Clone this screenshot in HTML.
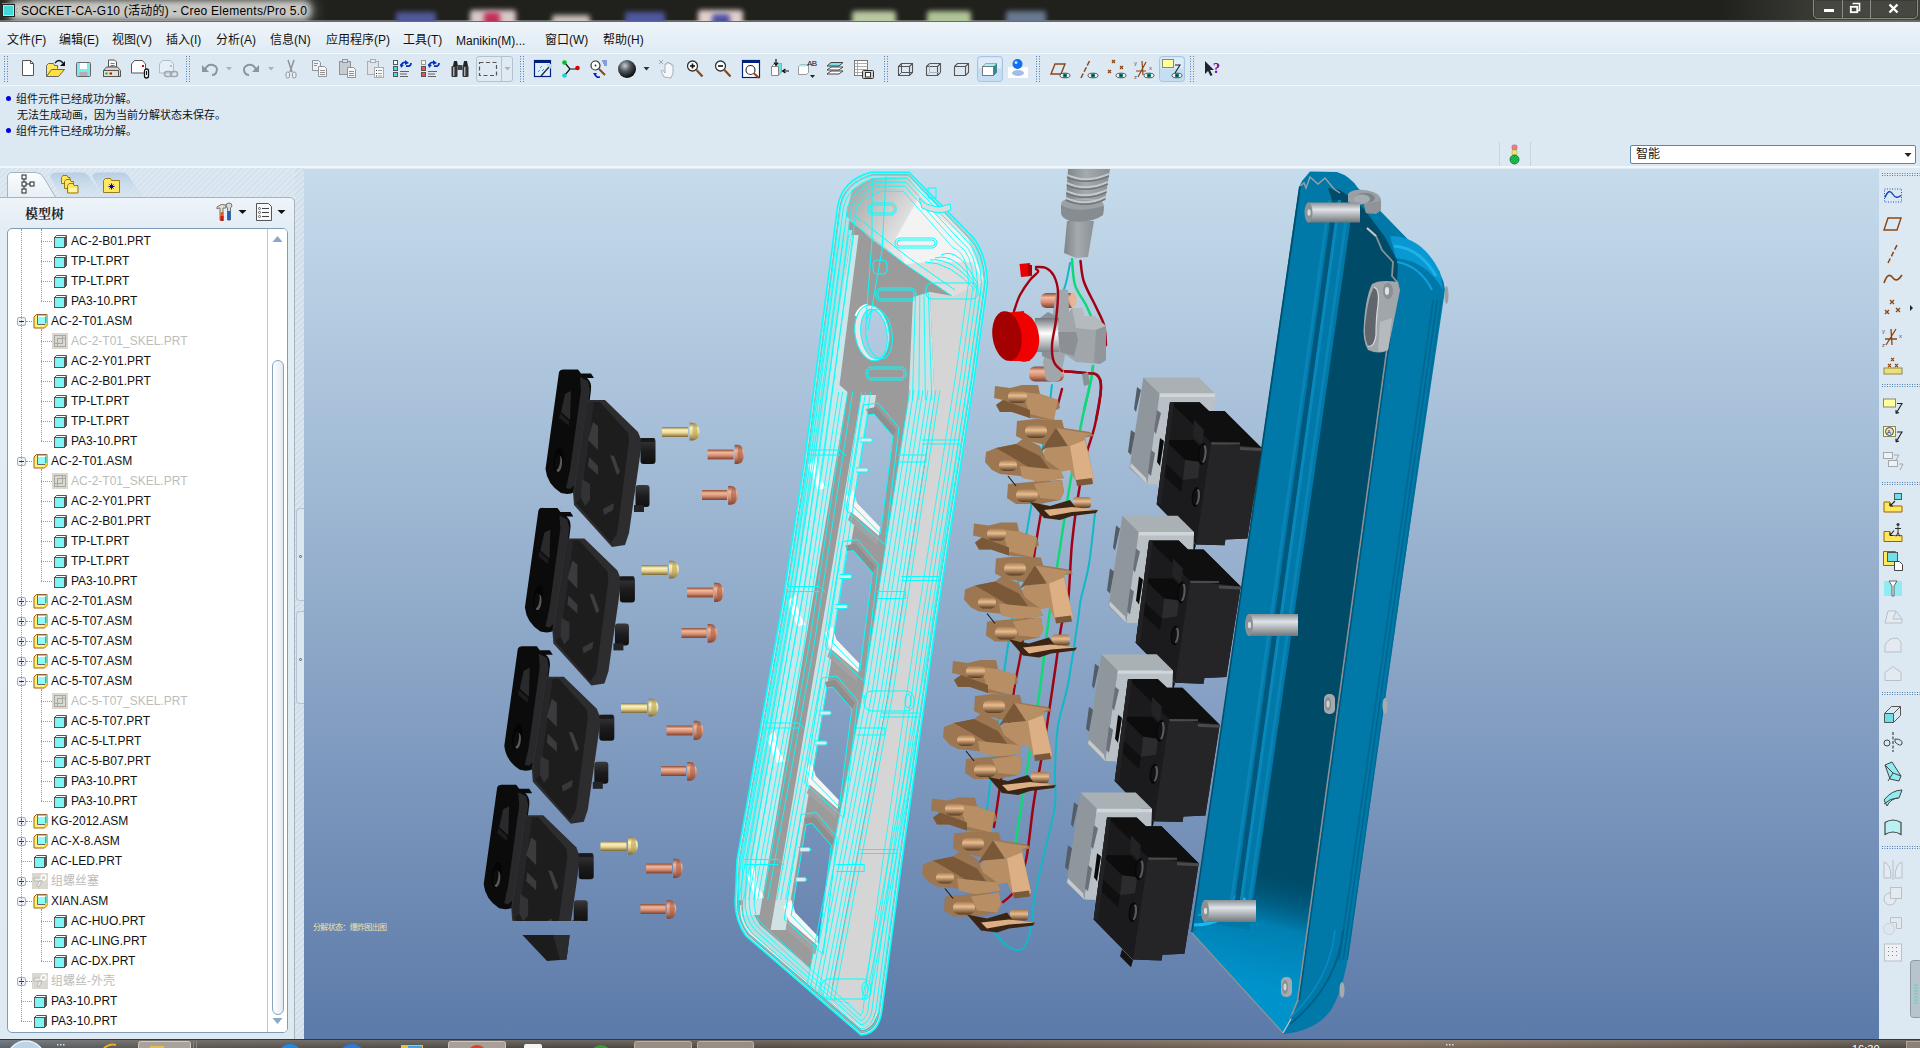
<!DOCTYPE html>
<html lang="zh-CN">
<head>
<meta charset="utf-8">
<title>SOCKET-CA-G10 (活动的) - Creo Elements/Pro 5.0</title>
<style>
*{box-sizing:border-box;margin:0;padding:0}
html,body{width:1920px;height:1048px;overflow:hidden;background:#dce9f3}
body{position:relative;font-family:"Liberation Sans","Noto Sans CJK SC",sans-serif;font-size:12px;color:#111}
.abs{position:absolute}
#titlebar{left:0;top:0;width:1920px;height:22px;background:linear-gradient(90deg,#20211d 0,#20211d 1720px,#3a3b35 1815px,#42433c 1920px);border-bottom:2px solid #6a6a66}
#titleglow{left:0;top:0;width:318px;height:21px;background:linear-gradient(90deg,rgba(215,215,212,.95) 0,rgba(210,210,207,.9) 240px,rgba(160,160,157,.55) 285px,rgba(60,60,56,0) 318px)}
#titletext{left:21px;top:3px;font-size:12px;line-height:16px;color:#000;white-space:nowrap;letter-spacing:0.25px}
#menubar{left:0;top:22px;width:1920px;height:31px;background:linear-gradient(180deg,#eef5fa 0,#e6eff6 60%,#dfeaf3 100%)}
.mi{position:absolute;top:8px;font-size:12px;line-height:20px;height:20px;color:#111;white-space:nowrap}
#toolbar{left:0;top:53px;width:1920px;height:33px;background:#dce9f3;border-top:1px solid #f3f8fb;border-bottom:1px solid #f3f8fb}
#msg{left:0;top:86px;width:1920px;height:81px;background:#dce9f3}
.ml{position:absolute;left:16px;font-size:11px;line-height:14px;letter-spacing:0;color:#111;white-space:nowrap}
.dot{position:absolute;left:6px;width:5px;height:5px;border-radius:3px;background:#0000e0}
#sep{left:0;top:166px;width:1920px;height:2px;background:#f1f6fa}
#left{left:0;top:168px;width:304px;height:872px;background:repeating-linear-gradient(135deg,#dde9f2 0,#dde9f2 2px,#d6e3ee 2px,#d6e3ee 4px)}
#view{left:304px;top:169px;width:1575px;height:871px;background:linear-gradient(180deg,#c6dcec 0,#5c7aa9 100%);overflow:hidden}
#right{left:1879px;top:168px;width:41px;height:872px;background:#dce9f3}
#taskbar{left:0;top:1039px;width:1920px;height:9px;background:linear-gradient(180deg,rgba(255,255,255,.18) 0,rgba(255,255,255,0) 100%),linear-gradient(90deg,#5a626c 0,#5a5650 8%,#4c4640 30%,#5c5046 50%,#7a6858 72%,#66584c 88%,#4e4842 100%);border-top:1px solid #3a3632}

#tabs{left:0;top:168px;width:304px;height:30px}
#panel{left:-2px;top:197px;width:297px;height:850px;border:1px solid #a7b4c0;border-radius:0 5px 0 0;background:linear-gradient(180deg,#eef4f9 0,#e3edf5 30px,#dfe9f2 100%)}
#ptitle{left:25px;top:203px;font-size:13px;font-weight:bold;color:#222;font-family:"Liberation Serif","Noto Serif CJK SC",serif;letter-spacing:0px}
#tbox{left:7px;top:228px;width:281px;height:805px;background:#fff;border:1px solid #7f9db9;border-radius:5px;overflow:hidden}
#tbox .ic{position:absolute}
.tt{position:absolute;font-size:12px;line-height:18px;color:#111;white-space:nowrap}
.tt.g{color:#bcbcbc}
.hd{position:absolute;height:0;border-top:1px dotted #9a9a9a}
.vd{position:absolute;width:0;border-left:1px dotted #9a9a9a}
#sbar{left:259px;top:0;width:21px;height:806px;background:#fff;border-left:1px solid #b8c8d8;position:absolute}
#sthumb{position:absolute;left:4px;top:131px;width:12px;height:655px;border:1px solid #8aa4c0;border-radius:6px;background:linear-gradient(90deg,#fdfeff 0,#eef3f8 60%,#dfe8f0 100%)}
#sash{left:295px;top:168px;width:9px;height:872px;background:repeating-linear-gradient(135deg,#dbe6f0 0,#dbe6f0 2px,#d0deea 2px,#d0deea 4px)}
.sh{position:absolute;left:1px;width:9px;border:1px solid #b4c4d4;border-right:none;border-radius:4px 0 0 4px;background:#dbe6f0}
.sh i{position:absolute;left:2px;top:50%;width:3px;height:3px;border:1px solid #556;border-radius:2px}

#tglow{left:0;top:0;width:340px;height:21px;overflow:hidden}
#tglow i{position:absolute;left:16px;top:8px;width:288px;height:5px;background:rgba(208,208,204,.95);box-shadow:0 0 6px 7px rgba(208,208,204,.95),0 0 14px 10px rgba(150,150,146,.6);border-radius:4px}
#wbtn{left:1813px;top:-1px;width:105px;height:20px;border:1px solid #8a8b84;border-radius:0 0 5px 5px;background:#464740;box-shadow:inset 0 0 0 1px #3a3b35}
#wbtn b{position:absolute;top:0;width:1px;height:18px;background:#8a8b84}
#combo{left:1630px;top:145px;width:286px;height:19px;background:#fff;border:1px solid #5b86a8;border-radius:2px;font-size:12px;line-height:17px;padding-left:5px}

#blobs{left:0;top:0;width:1920px;height:21px;overflow:hidden}
#blobs i{position:absolute;top:10px;height:16px;border-radius:3px;filter:blur(2.5px)}
</style>
</head>
<body>
<div id="titlebar" class="abs"></div>
<div id="blobs" class="abs"><i style="left:396px;width:40px;top:12px;background:#50589a"></i><i style="left:470px;width:46px;background:#d8c8c8"></i><i style="left:484px;width:16px;top:12px;background:#c0305a"></i><i style="left:552px;width:38px;top:15px;background:#c8c0b8"></i><i style="left:625px;width:40px;top:12px;background:#5058a0"></i><i style="left:698px;width:45px;background:#e0d0cc"></i><i style="left:712px;width:18px;top:14px;background:#5050a0"></i><i style="left:852px;width:44px;top:11px;background:#b8c8a0"></i><i style="left:927px;width:44px;top:11px;background:#b0c498"></i><i style="left:1006px;width:40px;top:11px;background:#687890"></i></div>
<div id="tglow" class="abs"><i></i></div>
<div id="titletext" class="abs">SOCKET-CA-G10 (活动的) - Creo Elements/Pro 5.0</div>
<svg class="abs" style="left:0;top:0" width="20" height="21" viewBox="0 0 20 21"><rect x="2.500" y="4.500" width="12" height="12" fill="#f4e060" stroke="#222"/><rect x="4" y="6" width="9" height="9" fill="#40d8d8"/><path d="M2,3.500 h12" stroke="#888"/></svg>
<div id="wbtn" class="abs"><b style="left:28px"></b><b style="left:56px"></b></div>
<svg class="abs" style="left:1813px;top:0" width="105" height="20" viewBox="1813 0 105 20"><rect x="1824" y="9" width="10" height="3" fill="#fff"/><path d="M1852.500,3.500 h7 v7 h-2" fill="none" stroke="#fff" stroke-width="1.600"/><rect x="1850.800" y="6.800" width="6.400" height="5.400" fill="none" stroke="#fff" stroke-width="1.800"/><path d="M1889.500,4.500 l8,8 M1897.500,4.500 l-8,8" stroke="#fff" stroke-width="2.400"/></svg>
<div id="menubar" class="abs">
<span class="mi" style="left:7px">文件(F)</span>
<span class="mi" style="left:59px">编辑(E)</span>
<span class="mi" style="left:112px">视图(V)</span>
<span class="mi" style="left:166px">插入(I)</span>
<span class="mi" style="left:216px">分析(A)</span>
<span class="mi" style="left:270px">信息(N)</span>
<span class="mi" style="left:326px">应用程序(P)</span>
<span class="mi" style="left:403px">工具(T)</span>
<span class="mi" style="left:456px;top:9px">Manikin(M)...</span>
<span class="mi" style="left:545px">窗口(W)</span>
<span class="mi" style="left:603px">帮助(H)</span>
</div>
<div id="toolbar" class="abs"></div>
<!--TOOLBAR-->
<svg class="abs" style="left:0;top:53px" width="1300" height="33" viewBox="0 53 1300 33"><path d="M4.5,56 v27 M7.5,56 v27" stroke="#4f7fb4" stroke-width="1" stroke-dasharray="1,1.5" fill="none"/><path d="M186.5,56 v27 M189.5,56 v27" stroke="#4f7fb4" stroke-width="1" stroke-dasharray="1,1.5" fill="none"/><path d="M520.5,56 v27 M523.5,56 v27" stroke="#4f7fb4" stroke-width="1" stroke-dasharray="1,1.5" fill="none"/><path d="M884.5,56 v27 M887.5,56 v27" stroke="#4f7fb4" stroke-width="1" stroke-dasharray="1,1.5" fill="none"/><path d="M1036.5,56 v27 M1039.5,56 v27" stroke="#4f7fb4" stroke-width="1" stroke-dasharray="1,1.5" fill="none"/><path d="M1190.5,56 v27 M1193.5,56 v27" stroke="#4f7fb4" stroke-width="1" stroke-dasharray="1,1.5" fill="none"/><g transform="translate(28,69)"><path d="M-5.500,-8.500 h8 l3,3 v12 h-11z" fill="#fff" stroke="#555"/><path d="M2.500,-8.500 v3 h3" fill="none" stroke="#555"/></g><g transform="translate(56,69)"><path d="M-9.500,7.500 v-11 l2,-2 h5 l1,2 h3 v3" fill="#ffe860" stroke="#666"/><path d="M-9.500,7.500 l5,-7 h13 l-6,7z" fill="#ffe040" stroke="#666"/><path d="M-1,-6 q4,-5 8,0" fill="none" stroke="#111" stroke-width="1.300"/><path d="M9,-8 v5 h-5z" fill="#111"/></g><g transform="translate(84,69)"><rect x="-7.500" y="-6.500" width="14" height="14" rx="1" fill="#7eeaf0" stroke="#666"/><rect x="-4" y="-6" width="7" height="6" fill="#fff"/><rect x="-4.500" y="3" width="8" height="4" fill="#b0b0b0"/></g><g transform="translate(112,69)"><path d="M-3.500,-2 v-7 h6 l2,2 v5z" fill="#fff" stroke="#555"/><path d="M-1.500,-5.500h4M-1.500,-3.500h4" stroke="#555" stroke-width=".8"/><path d="M-8.500,1.500 l3,-3.500 h11 l3,3.500 v6 h-17z" fill="#d8d4c8" stroke="#555"/><rect x="-8.500" y="1.500" width="15" height="6" fill="#e4e0d4" stroke="#555"/><rect x="-6.500" y="3.500" width="2" height="2" fill="#00b000"/><rect x="-2.500" y="3.500" width="2.500" height="2" fill="#d00000"/></g><g transform="translate(140,69)"><path d="M-8.500,4 v-9 l3,-3.500 h8 l3,3.500 v9z" fill="#fff" stroke="#555"/><rect x="2" y="-4" width="2" height="2" fill="#e00000"/><rect x="4.500" y="0" width="4" height="9" rx="2" fill="#fff" stroke="#111" stroke-width="1.300"/><path d="M6.500,2v4" stroke="#111"/></g><g transform="translate(168,69)"><path d="M-8.500,4 v-9 l3,-3.500 h8 l3,3.500 v9z" fill="#e6eef6" stroke="#b4bcc4"/><rect x="2" y="-4" width="2" height="2" fill="#b4bcc4"/><rect x="-3.500" y="2.500" width="7" height="5" rx="2.500" fill="none" stroke="#a0a8b0" stroke-width="1.500"/><rect x="2.500" y="2.500" width="7" height="5" rx="2.500" fill="none" stroke="#a0a8b0" stroke-width="1.500"/></g><g transform="translate(210,69)"><path d="M-8,-4 v7 h7z" fill="#8e9499"/><path d="M-5,1 q2,-6 8,-5 q6,2 3,8 q-1,2 -4,2" fill="none" stroke="#8e9499" stroke-width="2"/></g><path d="M226,67 h6 l-3,3.500z" fill="#aab2ba"/><g transform="translate(251,69)"><path d="M8,-4 v7 h-7z" fill="#8e9499"/><path d="M5,1 q-2,-6 -8,-5 q-6,2 -3,8 q1,2 4,2" fill="none" stroke="#8e9499" stroke-width="2"/></g><path d="M268,67 h6 l-3,3.500z" fill="#aab2ba"/><g transform="translate(291,69)"><path d="M-3,-9 l4,12 M3,-9 l-4,12" stroke="#8e9499" stroke-width="1.500" fill="none"/><rect x="-5" y="3" width="3.500" height="6" rx="1.700" fill="#e8eef4" stroke="#8e9499"/><rect x="1.500" y="3" width="3.500" height="6" rx="1.700" fill="#e8eef4" stroke="#8e9499"/></g><g transform="translate(320,69)"><path d="M-7.500,-8.500 h6 l2,2 v8 h-8z" fill="#eef2f6" stroke="#8e9499"/><path d="M-1.500,-2.500 h6 l2,2 v8 h-8z" fill="#f4f6f8" stroke="#8e9499"/><path d="M0,1.500h5M0,3.500h5M0,5.500h5M-6,-5.500h4M-6,-3.500h3" stroke="#777" stroke-width=".8"/></g><g transform="translate(348,69)"><rect x="-8.500" y="-7.500" width="11" height="13" fill="#c8ccd0" stroke="#8e9499"/><rect x="-5.500" y="-9.500" width="5" height="3" fill="#dde" stroke="#8e9499"/><path d="M-0.500,-1.500 h6 l2,2 v8 h-8z" fill="#f4f6f8" stroke="#8e9499"/><path d="M1,2.500h5M1,4.500h5M1,6.500h5" stroke="#777" stroke-width=".8"/></g><g transform="translate(376,69)"><rect x="-8.500" y="-7.500" width="11" height="13" fill="#dfe5ea" stroke="#a8aeb4"/><rect x="-5.500" y="-9.500" width="5" height="3" fill="#e8ecf0" stroke="#a8aeb4"/><rect x="-1.500" y="-1.500" width="9" height="10" fill="#f6f8fa" stroke="#a8aeb4"/><path d="M2,1.500h4M2,4.500h4M2,7h4" stroke="#888" stroke-width=".8"/><path d="M0,1.500h1M0,4.500h1M0,7h1" stroke="#333" stroke-width="1"/></g><g transform="translate(403,69)"><rect x="-9.500" y="-8.500" width="4" height="4" fill="#fff" stroke="#555"/><rect x="-9.500" y="-2.500" width="4" height="4" fill="#40e0e8" stroke="#555"/><rect x="-9.500" y="3.500" width="4" height="4" fill="#40e0e8" stroke="#555"/><path d="M-2,-3 q1,-5 6,-3" fill="none" stroke="#0030c0" stroke-width="1.800"/><path d="M2,-9 l4,3 l-4,2z" fill="#0030c0"/><path d="M8,-6 q0,4 -5,3" fill="none" stroke="#0030c0" stroke-width="1.800"/><path d="M-3,-5 l4,1 l-3,3z" fill="#0030c0"/><path d="M-3,2.500h9M-3,5h7M-3,7.500h8" stroke="#555" stroke-width=".9"/></g><g transform="translate(431,69)"><rect x="-9.500" y="-8.500" width="4" height="4" fill="#f4f4f4" stroke="#999"/><rect x="-9.500" y="-2.500" width="4" height="4" fill="#f05050" stroke="#555"/><rect x="-9.500" y="3.500" width="4" height="4" fill="#f05050" stroke="#555"/><path d="M-2,-3 q1,-5 6,-3" fill="none" stroke="#0030c0" stroke-width="1.800"/><path d="M2,-9 l4,3 l-4,2z" fill="#0030c0"/><path d="M8,-6 q0,4 -5,3" fill="none" stroke="#0030c0" stroke-width="1.800"/><path d="M-3,-5 l4,1 l-3,3z" fill="#0030c0"/><path d="M-3,2.500h9M-3,5h7M-3,7.500h8" stroke="#555" stroke-width=".9"/></g><g transform="translate(460,69)"><rect x="-8.500" y="-3" width="6" height="11" rx="1" fill="#333"/><rect x="2.500" y="-3" width="6" height="11" rx="1" fill="#333"/><path d="M-7,-3 l1,-5 h3 l1,5z M3,-3 l1,-5 h3 l1,5z" fill="#222"/><rect x="-2.500" y="-4" width="5" height="5" fill="#444"/><rect x="-7" y="-2" width="1.500" height="9" fill="#aaa"/><rect x="4" y="-2" width="1.500" height="9" fill="#aaa"/></g><rect x="476.500" y="56.500" width="36" height="25" rx="2.500" fill="#dfeaf3" stroke="#b4c2d0"/><path d="M501.500,57v24" stroke="#b4c2d0"/><rect x="479.500" y="62.500" width="17" height="13" fill="none" stroke="#555" stroke-width="1.200" stroke-dasharray="4,2.500"/><path d="M504.500,67 h6 l-3,3.500z" fill="#aab2ba"/><g transform="translate(543,69)"><rect x="-8.500" y="-8.500" width="16" height="16" fill="#dfefff" stroke="#002080" stroke-width="1.200"/><rect x="-8.500" y="-8.500" width="16" height="2.500" fill="#002080"/><path d="M-2,7 l8,-9" stroke="#333" stroke-width="1.500"/><path d="M-5,3 l2,-2 M-3,-1 l2,-2M-1,2l2,-2" stroke="#30a0e0" stroke-width="1"/><path d="M3,-5 l5,0 l0,5z" fill="#b8d4f0"/></g><g transform="translate(571,69)"><path d="M-6,-6 l5,6 l-5,6 M-1,0 h8" stroke="#111" stroke-width="1.200" fill="none"/><circle cx="-6.500" cy="-6.500" r="2.300" fill="#00c020"/><circle cx="-6.500" cy="6.500" r="2.300" fill="#10d8e0"/><circle cx="6.500" cy="-1" r="2.300" fill="#e00000"/></g><g transform="translate(599,69)"><circle cx="-3.500" cy="-3.500" r="4.500" fill="#fff" stroke="#333" stroke-width="1.200"/><circle cx="-3.500" cy="-3.500" r="1" fill="#333"/><path d="M0,0 l6,6" stroke="#8b4513" stroke-width="2"/><path d="M3,-8h5M4,-6h4M5,-4h3" stroke="#2040c0" stroke-width=".9"/><path d="M-4,5 q1,4 5,3" fill="none" stroke="#0020c0" stroke-width="1.500"/><path d="M-6,4 l4,0 l-2,3z" fill="#0020c0"/></g><defs><radialGradient id="gSph" cx=".38" cy=".32" r=".7"><stop offset="0" stop-color="#c8ccd0"/><stop offset=".45" stop-color="#50565c"/><stop offset="1" stop-color="#08080a"/></radialGradient></defs><g transform="translate(627,69)"><circle cx="0" cy="0" r="9" fill="url(#gSph)"/></g><path d="M643.500,67 h6 l-3,3.500z" fill="#333"/><g transform="translate(668,69)"><path d="M-4,8 l-3,-6 l1.500,-1 l2.500,3 v-9 h2 v-1.500 h2 v1 h2 v1.500 h2 v8 l-2,5z" fill="#f4f8fb" stroke="#a0a8b0" stroke-width=".9"/><path d="M-9,-9 l4,4 M-5,-9 l-4,4" stroke="#a0a8b0" stroke-width="1"/></g><g transform="translate(695,69)"><circle cx="-2.500" cy="-3" r="5" fill="#fff" stroke="#333" stroke-width="1.300"/><path d="M1.500,1 l6,6.500" stroke="#8b4513" stroke-width="2.200"/><path d="M-5,-3 h5" stroke="#111" stroke-width="1.600"/><path d="M-2.500,-5.500 v5" stroke="#111" stroke-width="1.600"/></g><g transform="translate(723,69)"><circle cx="-2.500" cy="-3" r="5" fill="#fff" stroke="#333" stroke-width="1.300"/><path d="M1.500,1 l6,6.500" stroke="#8b4513" stroke-width="2.200"/><path d="M-5,-3 h5" stroke="#111" stroke-width="1.600"/></g><g transform="translate(751,69)"><rect x="-8.500" y="-8.500" width="17" height="17" fill="#fff" stroke="#002080" stroke-width="1.200"/><rect x="-8.500" y="-8.500" width="17" height="2.500" fill="#002080"/><circle cx="-0.500" cy="1" r="4.500" fill="#fff" stroke="#333" stroke-width="1.200"/><path d="M3,4.500 l5,4.500" stroke="#8b4513" stroke-width="2"/></g><g transform="translate(779,69)"><path d="M-7.500,-2.500 l3,-3 h7 v9 l-3,3 h-7z" fill="#fff" stroke="#888"/><path d="M-4.500,-5.500 h7 v9 l-3,3 v-9 z" fill="#70e0e8"/><path d="M-7.500,-2.500 h7 v9" fill="none" stroke="#888"/><path d="M-3,-10 v6 M-5,-6.500 l2,3 l2,-3" stroke="#111" stroke-width="1.200" fill="none"/><path d="M10,2 h-6 M6.500,0 l-3,2 l3,2" stroke="#111" stroke-width="1.200" fill="none"/></g><g transform="translate(807,69)"><path d="M-8.500,-2.500 l2,-2 h8 v8 l-2,2 h-8z" fill="#fff" stroke="#999"/><path d="M-6.500,-4.500 h8 l-2,2 h-8z" fill="#a8ecf0"/><text x="0" y="-3" font-size="8" font-family="Liberation Sans,sans-serif" fill="#111" textLength="10">AB</text><path d="M3,6 h5 l-2.500,3z" fill="#222"/></g><g transform="translate(835,69)"><path d="M-8,5 l4,-3 h12 l-4,3z" fill="#fff" stroke="#444"/><path d="M-8,1 l4,-3 h12 l-4,3z" fill="#fff" stroke="#444"/><path d="M-8,-3 l4,-3.500 h12 l-4,3.500z" fill="#78e4ec" stroke="#444"/></g><g transform="translate(864,69)"><rect x="-9.500" y="-8.500" width="13" height="15" fill="#fff" stroke="#777"/><path d="M-9.500,-5.500h13M-9.500,-2.500h13M-9.500,.5h13M-9.500,3.500h13M-6.500,-8.500v15" stroke="#999" stroke-width=".8"/><rect x="-1.500" y="1.500" width="11" height="8" rx="1" fill="#d0d0c8" stroke="#333"/><rect x="1.500" y="3.500" width="5" height="4.500" fill="#fff" stroke="#333"/></g><g transform="translate(906,69)"><path d="M-7.500,-2.500 l3,-3 h11 v9 l-3,3 h-11z M-7.500,-2.500 h11 v9 M3.500,-2.500 l3,-3" fill="none" stroke="#555" stroke-width="1.100"/><path d="M-4.500,-5.500 v9 h11 M-4.500,3.500 l-3,3" fill="none" stroke="#555" stroke-width="1"/></g><g transform="translate(934,69)"><path d="M-7.500,-2.500 l3,-3 h11 v9 l-3,3 h-11z M-7.500,-2.500 h11 v9 M3.500,-2.500 l3,-3" fill="none" stroke="#555" stroke-width="1.100"/><path d="M-4.500,-5.500 v9 h11 M-4.500,3.500 l-3,3" fill="none" stroke="#b0b4b8" stroke-width="1"/></g><g transform="translate(962,69)"><path d="M-7.500,-2.500 l3,-3 h11 v9 l-3,3 h-11z M-7.500,-2.500 h11 v9 M3.500,-2.500 l3,-3" fill="none" stroke="#555" stroke-width="1.100"/></g><rect x="977.500" y="56.500" width="25" height="25" rx="3" fill="#c4def4" stroke="#a8c4e0"/><rect x="978.500" y="57.500" width="23" height="11" rx="2" fill="#dcecf9"/><g transform="translate(990,69)"><path d="M-7.500,-2.500 l3,-3 h11 v9 l-3,3 h-11z" fill="#fff" stroke="#777"/><path d="M-7.500,-2.500 l3,-3 h11 l-3,3z" fill="#a0f0f4"/><path d="M3.500,-2.500 l3,-3 v9 l-3,3z" fill="#209098"/><rect x="-7.500" y="-2.500" width="11" height="9" fill="#fff" stroke="#777"/></g><g transform="translate(1018,69)"><rect x="-10" y="-2" width="20" height="11" fill="#fff"/><ellipse cx="0" cy="4" rx="6" ry="3" fill="#7aa0d8" opacity=".7"/><circle cx="-0.500" cy="-5" r="5" fill="#1070f0"/><circle cx="-2" cy="-6.500" r="1.500" fill="#c0e0ff"/></g><g transform="translate(1060,69)"><path d="M-9,5 l4,-10 h10 l-4,10z" fill="none" stroke="#8b4513" stroke-width="1.400"/><ellipse cx="5" cy="6.500" rx="5" ry="2.300" fill="#fff" stroke="#222" stroke-width=".8"/><circle cx="5" cy="6.500" r="2.200" fill="#108078"/><circle cx="5" cy="6.500" r=".9" fill="#033"/></g><g transform="translate(1088,69)"><path d="M-7,9 l9,-18" stroke="#8b4513" stroke-width="1.500" stroke-dasharray="5,2" fill="none"/><ellipse cx="5" cy="6.500" rx="5" ry="2.300" fill="#fff" stroke="#222" stroke-width=".8"/><circle cx="5" cy="6.500" r="2.200" fill="#108078"/><circle cx="5" cy="6.500" r=".9" fill="#033"/></g><g transform="translate(1116,69)"><path d="M-4,-9l3,3m0,-3l-3,3 M-8,1l3,3m0,-3l-3,3 M4,-3l3,3m0,-3l-3,3" stroke="#8b4513" stroke-width="1.200" fill="none"/><ellipse cx="5" cy="6.500" rx="5" ry="2.300" fill="#fff" stroke="#222" stroke-width=".8"/><circle cx="5" cy="6.500" r="2.200" fill="#108078"/><circle cx="5" cy="6.500" r=".9" fill="#033"/></g><g transform="translate(1144,69)"><path d="M-8,2 h10 M-2,-8 l1,14 M-6,8 l8,-15" stroke="#8b4513" stroke-width="1.200" fill="none"/><text x="-10" y="-4" font-size="6" font-family="Liberation Sans,sans-serif" fill="#555">y</text><text x="-10" y="10" font-size="6" font-family="Liberation Sans,sans-serif" fill="#555">z</text><text x="5" y="1" font-size="6" font-family="Liberation Sans,sans-serif" fill="#555">x</text><ellipse cx="5" cy="6.500" rx="5" ry="2.300" fill="#fff" stroke="#222" stroke-width=".8"/><circle cx="5" cy="6.500" r="2.200" fill="#108078"/><circle cx="5" cy="6.500" r=".9" fill="#033"/></g><rect x="1159.500" y="56.500" width="25" height="25" rx="3" fill="#c4def4" stroke="#a8c4e0"/><rect x="1160.500" y="57.500" width="23" height="11" rx="2" fill="#dcecf9"/><g transform="translate(1172,69)"><rect x="-9.500" y="-9.500" width="11" height="8" fill="#ffffa0" stroke="#886"/><path d="M3,-4 h5 l-5,8" fill="none" stroke="#222" stroke-width="1.100"/><ellipse cx="5" cy="6.500" rx="5" ry="2.300" fill="#fff" stroke="#222" stroke-width=".8"/><circle cx="5" cy="6.500" r="2.200" fill="#108078"/><circle cx="5" cy="6.500" r=".9" fill="#033"/></g><g transform="translate(1213,69)"><path d="M-8,-8 v13 l3,-3 l2.500,5 l2,-1 l-2.500,-5 h4z" fill="#223"/><text x="0" y="4" font-size="14" font-weight="bold" font-family="Liberation Serif,serif" fill="#800080">?</text></g></svg>
<!--/TOOLBAR-->
<div id="msg" class="abs">
<i class="dot" style="top:9.5px"></i><span class="ml" style="top:5.5px">组件元件已经成功分解。</span>
<span class="ml" style="top:21.5px;left:17px">无法生成动画，因为当前分解状态未保存。</span>
<i class="dot" style="top:41.5px"></i><span class="ml" style="top:37.5px">组件元件已经成功分解。</span>
</div>
<div id="sep" class="abs"></div>
<div id="combo" class="abs">智能</div>
<svg class="abs" style="left:1495px;top:140px" width="425" height="28" viewBox="1495 140 425 28"><path d="M1904.500,153 h7 l-3.500,4z" fill="#222"/><path d="M1499.500,142 v24 M1530.500,142 v24" stroke="#c8d4de"/><rect x="1512" y="145" width="5" height="5" rx="1.500" fill="#f08080" stroke="#a66" stroke-width=".6"/><rect x="1512" y="150" width="5" height="5" rx="1.500" fill="#f0e860" stroke="#aa6" stroke-width=".6"/><circle cx="1514.500" cy="159.500" r="4.500" fill="#20c040" stroke="#064" stroke-width=".8"/><path d="M1512,162 l5,-5 M1511,160 l4,-4 M1514,163 l4,-4" stroke="#085" stroke-width=".6"/></svg>
<div id="left" class="abs"></div>
<svg id="tabs" class="abs" width="304" height="30" viewBox="0 168 304 30">
<defs><linearGradient id="tabA" x1="0" y1="0" x2="0" y2="1"><stop offset="0" stop-color="#fbfdfe"/><stop offset="1" stop-color="#e6eef5"/></linearGradient>
<linearGradient id="tabB" x1="0" y1="0" x2="0" y2="1"><stop offset="0" stop-color="#b7cee3"/><stop offset="1" stop-color="#d3e1ee" stop-opacity=".3"/></linearGradient></defs>
<path d="M50,176 Q52,172.500 56,172.500 L82,172.500 Q87,172.500 90,178 L104,198 L62,198 Z" fill="url(#tabB)"/>
<path d="M92,176 Q94,172.500 98,172.500 L122,172.500 Q127,172.500 130,178 L144,198 L104,198 Z" fill="url(#tabB)"/>
<path d="M7.500,198 L7.500,177 Q7.500,172.500 12,172.500 L36,172.500 Q41,172.500 44,178 L56,198 Z" fill="url(#tabA)" stroke="#a7b4c0"/>
<g transform="translate(-0.5,-1.5)" fill="#fff" stroke="#222" stroke-width="1"><rect x="22.500" y="176.500" width="4" height="4"/><rect x="22.500" y="183.500" width="4" height="4"/><rect x="22.500" y="190.500" width="4" height="4"/><rect x="30.500" y="183.500" width="4" height="4"/><path d="M24.500,180.500v3M24.500,187.500v3M26.500,185.500h4" fill="none"/></g>
<g stroke="#806000" stroke-width=".8" fill="#ffe860"><path d="M61.500,177.500 l1.500,-2 h4 l1,2 h2 v6 h-8.500z"/><path d="M64.500,181.500 l1.500,-2 h4 l1,2 h2.500 v7 h-9z"/><path d="M67.500,185.500 l1.500,-2 h4 l1,2 h4 v7.500 h-10.500z"/></g>
<rect x="69" y="188" width="8" height="4" fill="#fff6a8"/>
<path d="M103.500,180.500 l2,-2 h5 l1,2 h8 v12 h-16z" fill="#ffe860" stroke="#806000" stroke-width=".8"/>
<path d="M111.500,183.500v6M108.500,186.500h6M109.500,184.500l4,4M113.500,184.500l-4,4" stroke="#0000c0" stroke-width="1" fill="none"/>
</svg>
<div id="panel" class="abs"></div>
<div id="ptitle" class="abs">模型树</div>
<svg class="abs" style="left:210px;top:200px" width="80" height="24" viewBox="210 200 80 24">
<path d="M217,207 q4,-4 9,-2 l0,3 l-3,0 l0,12 l-3,0 l0,-12 q-2,0 -3,1z" fill="#e8e0d0" stroke="#555" stroke-width=".8"/>
<rect x="220.500" y="212" width="3" height="9" fill="#e06020"/><rect x="220.500" y="216" width="3" height="5" fill="#c02010"/>
<path d="M229,203 q3,0 3,3 l-1.500,2 l0,12 l-3,0 l0,-12 l-1.500,-2 q0,-3 3,-3z" fill="#d8dce0" stroke="#555" stroke-width=".8"/>
<rect x="227.500" y="211" width="3" height="9" fill="#2060c0"/>
<path d="M238.500,210 h8 l-4,4z" fill="#111"/>
<path d="M256.500,203.500 h12 l3,3 v14 h-15z" fill="#f8f8f8" stroke="#555" stroke-width="1"/>
<path d="M262,208.500h7M262,212.500h7M262,216.500h7" stroke="#444" stroke-width="1"/><g fill="#fff" stroke="#444" stroke-width=".8"><circle cx="259.500" cy="208.500" r="1"/><circle cx="259.500" cy="212.500" r="1"/><circle cx="259.500" cy="216.500" r="1"/></g>
<path d="M277.500,210 h8 l-4,4z" fill="#111"/>
</svg>
<div id="tbox" class="abs">
<!--TREE-->
<i class="hd" style="left:32.5px;top:12px;width:11px"></i>
<svg class="ic" style="left:44.5px;top:5px" width="15" height="15" viewBox="0 0 15 15"><polygon points="1.5,3.5 3.5,1.5 13.5,1.5 13.5,11.5 11.5,13.5 1.5,13.5" fill="#fff" stroke="#555" stroke-width="1"/><rect x="1.5" y="3.5" width="10" height="10" fill="#7ff4f4" stroke="#555" stroke-width="1"/><polygon points="11.5,3.5 13.5,1.5 13.5,11.5 11.5,13.5" fill="#4a5a5a"/></svg>
<span class="tt" style="left:63.0px;top:3px">AC-2-B01.PRT</span>
<i class="hd" style="left:32.5px;top:32px;width:11px"></i>
<svg class="ic" style="left:44.5px;top:25px" width="15" height="15" viewBox="0 0 15 15"><polygon points="1.5,3.5 3.5,1.5 13.5,1.5 13.5,11.5 11.5,13.5 1.5,13.5" fill="#fff" stroke="#555" stroke-width="1"/><rect x="1.5" y="3.5" width="10" height="10" fill="#7ff4f4" stroke="#555" stroke-width="1"/><polygon points="11.5,3.5 13.5,1.5 13.5,11.5 11.5,13.5" fill="#4a5a5a"/></svg>
<span class="tt" style="left:63.0px;top:23px">TP-LT.PRT</span>
<i class="hd" style="left:32.5px;top:52px;width:11px"></i>
<svg class="ic" style="left:44.5px;top:45px" width="15" height="15" viewBox="0 0 15 15"><polygon points="1.5,3.5 3.5,1.5 13.5,1.5 13.5,11.5 11.5,13.5 1.5,13.5" fill="#fff" stroke="#555" stroke-width="1"/><rect x="1.5" y="3.5" width="10" height="10" fill="#7ff4f4" stroke="#555" stroke-width="1"/><polygon points="11.5,3.5 13.5,1.5 13.5,11.5 11.5,13.5" fill="#4a5a5a"/></svg>
<span class="tt" style="left:63.0px;top:43px">TP-LT.PRT</span>
<i class="hd" style="left:32.5px;top:72px;width:11px"></i>
<svg class="ic" style="left:44.5px;top:65px" width="15" height="15" viewBox="0 0 15 15"><polygon points="1.5,3.5 3.5,1.5 13.5,1.5 13.5,11.5 11.5,13.5 1.5,13.5" fill="#fff" stroke="#555" stroke-width="1"/><rect x="1.5" y="3.5" width="10" height="10" fill="#7ff4f4" stroke="#555" stroke-width="1"/><polygon points="11.5,3.5 13.5,1.5 13.5,11.5 11.5,13.5" fill="#4a5a5a"/></svg>
<span class="tt" style="left:63.0px;top:63px">PA3-10.PRT</span>
<svg class="ic" style="left:8.5px;top:88px" width="9" height="9" viewBox="0 0 9 9"><rect x=".5" y=".5" width="8" height="8" rx="1.5" fill="#eef4fa" stroke="#9ab0c8"/><path d="M2,4.500 h5" stroke="#333" stroke-width="1"/></svg>
<i class="hd" style="left:17.5px;top:92px;width:6px"></i>
<svg class="ic" style="left:24.5px;top:85px" width="15" height="15" viewBox="0 0 15 15"><polygon points="1,3 3.5,0.5 14,0.5 14,11.5 11.5,14 1,14" fill="#fff278" stroke="#a85a10" stroke-width="1"/><polygon points="11.5,11 14,8.500 14,11.500 11.500,14" fill="#ffc800"/><rect x="5" y="1" width="8.500" height="9" fill="#fff"/><rect x="5" y="3" width="7" height="7" fill="#8ffcfc"/><polygon points="12,3 13.500,1.500 13.500,8.500 12,10" fill="#00c4c4"/><path d="M4.500,1 v9.500 h7.500" fill="none" stroke="#666" stroke-width="1"/><path d="M5,1 h8.500" stroke="#777" stroke-width="1"/></svg>
<span class="tt" style="left:43.0px;top:83px">AC-2-T01.ASM</span>
<i class="hd" style="left:32.5px;top:112px;width:11px"></i>
<svg class="ic" style="left:43.5px;top:104px" width="16" height="16" viewBox="0 0 16 16"><rect x="0" y="0" width="16" height="16" fill="#d8d8d0"/><rect x="2.500" y="2.500" width="8" height="8" fill="none" stroke="#a8a8a0"/><rect x="5.500" y="5.500" width="8" height="8" fill="none" stroke="#a8a8a0"/><rect x="2.500" y="2.500" width="11" height="11" fill="none" stroke="#a8a8a0"/></svg>
<span class="tt g" style="left:63.0px;top:103px">AC-2-T01_SKEL.PRT</span>
<i class="hd" style="left:32.5px;top:132px;width:11px"></i>
<svg class="ic" style="left:44.5px;top:125px" width="15" height="15" viewBox="0 0 15 15"><polygon points="1.5,3.5 3.5,1.5 13.5,1.5 13.5,11.5 11.5,13.5 1.5,13.5" fill="#fff" stroke="#555" stroke-width="1"/><rect x="1.5" y="3.5" width="10" height="10" fill="#7ff4f4" stroke="#555" stroke-width="1"/><polygon points="11.5,3.5 13.5,1.5 13.5,11.5 11.5,13.5" fill="#4a5a5a"/></svg>
<span class="tt" style="left:63.0px;top:123px">AC-2-Y01.PRT</span>
<i class="hd" style="left:32.5px;top:152px;width:11px"></i>
<svg class="ic" style="left:44.5px;top:145px" width="15" height="15" viewBox="0 0 15 15"><polygon points="1.5,3.5 3.5,1.5 13.5,1.5 13.5,11.5 11.5,13.5 1.5,13.5" fill="#fff" stroke="#555" stroke-width="1"/><rect x="1.5" y="3.5" width="10" height="10" fill="#7ff4f4" stroke="#555" stroke-width="1"/><polygon points="11.5,3.5 13.5,1.5 13.5,11.5 11.5,13.5" fill="#4a5a5a"/></svg>
<span class="tt" style="left:63.0px;top:143px">AC-2-B01.PRT</span>
<i class="hd" style="left:32.5px;top:172px;width:11px"></i>
<svg class="ic" style="left:44.5px;top:165px" width="15" height="15" viewBox="0 0 15 15"><polygon points="1.5,3.5 3.5,1.5 13.5,1.5 13.5,11.5 11.5,13.5 1.5,13.5" fill="#fff" stroke="#555" stroke-width="1"/><rect x="1.5" y="3.5" width="10" height="10" fill="#7ff4f4" stroke="#555" stroke-width="1"/><polygon points="11.5,3.5 13.5,1.5 13.5,11.5 11.5,13.5" fill="#4a5a5a"/></svg>
<span class="tt" style="left:63.0px;top:163px">TP-LT.PRT</span>
<i class="hd" style="left:32.5px;top:192px;width:11px"></i>
<svg class="ic" style="left:44.5px;top:185px" width="15" height="15" viewBox="0 0 15 15"><polygon points="1.5,3.5 3.5,1.5 13.5,1.5 13.5,11.5 11.5,13.5 1.5,13.5" fill="#fff" stroke="#555" stroke-width="1"/><rect x="1.5" y="3.5" width="10" height="10" fill="#7ff4f4" stroke="#555" stroke-width="1"/><polygon points="11.5,3.5 13.5,1.5 13.5,11.5 11.5,13.5" fill="#4a5a5a"/></svg>
<span class="tt" style="left:63.0px;top:183px">TP-LT.PRT</span>
<i class="hd" style="left:32.5px;top:212px;width:11px"></i>
<svg class="ic" style="left:44.5px;top:205px" width="15" height="15" viewBox="0 0 15 15"><polygon points="1.5,3.5 3.5,1.5 13.5,1.5 13.5,11.5 11.5,13.5 1.5,13.5" fill="#fff" stroke="#555" stroke-width="1"/><rect x="1.5" y="3.5" width="10" height="10" fill="#7ff4f4" stroke="#555" stroke-width="1"/><polygon points="11.5,3.5 13.5,1.5 13.5,11.5 11.5,13.5" fill="#4a5a5a"/></svg>
<span class="tt" style="left:63.0px;top:203px">PA3-10.PRT</span>
<svg class="ic" style="left:8.5px;top:228px" width="9" height="9" viewBox="0 0 9 9"><rect x=".5" y=".5" width="8" height="8" rx="1.5" fill="#eef4fa" stroke="#9ab0c8"/><path d="M2,4.500 h5" stroke="#333" stroke-width="1"/></svg>
<i class="hd" style="left:17.5px;top:232px;width:6px"></i>
<svg class="ic" style="left:24.5px;top:225px" width="15" height="15" viewBox="0 0 15 15"><polygon points="1,3 3.5,0.5 14,0.5 14,11.5 11.5,14 1,14" fill="#fff278" stroke="#a85a10" stroke-width="1"/><polygon points="11.5,11 14,8.500 14,11.500 11.500,14" fill="#ffc800"/><rect x="5" y="1" width="8.500" height="9" fill="#fff"/><rect x="5" y="3" width="7" height="7" fill="#8ffcfc"/><polygon points="12,3 13.500,1.500 13.500,8.500 12,10" fill="#00c4c4"/><path d="M4.500,1 v9.500 h7.500" fill="none" stroke="#666" stroke-width="1"/><path d="M5,1 h8.500" stroke="#777" stroke-width="1"/></svg>
<span class="tt" style="left:43.0px;top:223px">AC-2-T01.ASM</span>
<i class="hd" style="left:32.5px;top:252px;width:11px"></i>
<svg class="ic" style="left:43.5px;top:244px" width="16" height="16" viewBox="0 0 16 16"><rect x="0" y="0" width="16" height="16" fill="#d8d8d0"/><rect x="2.500" y="2.500" width="8" height="8" fill="none" stroke="#a8a8a0"/><rect x="5.500" y="5.500" width="8" height="8" fill="none" stroke="#a8a8a0"/><rect x="2.500" y="2.500" width="11" height="11" fill="none" stroke="#a8a8a0"/></svg>
<span class="tt g" style="left:63.0px;top:243px">AC-2-T01_SKEL.PRT</span>
<i class="hd" style="left:32.5px;top:272px;width:11px"></i>
<svg class="ic" style="left:44.5px;top:265px" width="15" height="15" viewBox="0 0 15 15"><polygon points="1.5,3.5 3.5,1.5 13.5,1.5 13.5,11.5 11.5,13.5 1.5,13.5" fill="#fff" stroke="#555" stroke-width="1"/><rect x="1.5" y="3.5" width="10" height="10" fill="#7ff4f4" stroke="#555" stroke-width="1"/><polygon points="11.5,3.5 13.5,1.5 13.5,11.5 11.5,13.5" fill="#4a5a5a"/></svg>
<span class="tt" style="left:63.0px;top:263px">AC-2-Y01.PRT</span>
<i class="hd" style="left:32.5px;top:292px;width:11px"></i>
<svg class="ic" style="left:44.5px;top:285px" width="15" height="15" viewBox="0 0 15 15"><polygon points="1.5,3.5 3.5,1.5 13.5,1.5 13.5,11.5 11.5,13.5 1.5,13.5" fill="#fff" stroke="#555" stroke-width="1"/><rect x="1.5" y="3.5" width="10" height="10" fill="#7ff4f4" stroke="#555" stroke-width="1"/><polygon points="11.5,3.5 13.5,1.5 13.5,11.5 11.5,13.5" fill="#4a5a5a"/></svg>
<span class="tt" style="left:63.0px;top:283px">AC-2-B01.PRT</span>
<i class="hd" style="left:32.5px;top:312px;width:11px"></i>
<svg class="ic" style="left:44.5px;top:305px" width="15" height="15" viewBox="0 0 15 15"><polygon points="1.5,3.5 3.5,1.5 13.5,1.5 13.5,11.5 11.5,13.5 1.5,13.5" fill="#fff" stroke="#555" stroke-width="1"/><rect x="1.5" y="3.5" width="10" height="10" fill="#7ff4f4" stroke="#555" stroke-width="1"/><polygon points="11.5,3.5 13.5,1.5 13.5,11.5 11.5,13.5" fill="#4a5a5a"/></svg>
<span class="tt" style="left:63.0px;top:303px">TP-LT.PRT</span>
<i class="hd" style="left:32.5px;top:332px;width:11px"></i>
<svg class="ic" style="left:44.5px;top:325px" width="15" height="15" viewBox="0 0 15 15"><polygon points="1.5,3.5 3.5,1.5 13.5,1.5 13.5,11.5 11.5,13.5 1.5,13.5" fill="#fff" stroke="#555" stroke-width="1"/><rect x="1.5" y="3.5" width="10" height="10" fill="#7ff4f4" stroke="#555" stroke-width="1"/><polygon points="11.5,3.5 13.5,1.5 13.5,11.5 11.5,13.5" fill="#4a5a5a"/></svg>
<span class="tt" style="left:63.0px;top:323px">TP-LT.PRT</span>
<i class="hd" style="left:32.5px;top:352px;width:11px"></i>
<svg class="ic" style="left:44.5px;top:345px" width="15" height="15" viewBox="0 0 15 15"><polygon points="1.5,3.5 3.5,1.5 13.5,1.5 13.5,11.5 11.5,13.5 1.5,13.5" fill="#fff" stroke="#555" stroke-width="1"/><rect x="1.5" y="3.5" width="10" height="10" fill="#7ff4f4" stroke="#555" stroke-width="1"/><polygon points="11.5,3.5 13.5,1.5 13.5,11.5 11.5,13.5" fill="#4a5a5a"/></svg>
<span class="tt" style="left:63.0px;top:343px">PA3-10.PRT</span>
<svg class="ic" style="left:8.5px;top:368px" width="9" height="9" viewBox="0 0 9 9"><rect x=".5" y=".5" width="8" height="8" rx="1.5" fill="#eef4fa" stroke="#9ab0c8"/><path d="M2,4.500 h5" stroke="#333" stroke-width="1"/><path d="M4.500,2 v5" stroke="#333" stroke-width="1"/></svg>
<i class="hd" style="left:17.5px;top:372px;width:6px"></i>
<svg class="ic" style="left:24.5px;top:365px" width="15" height="15" viewBox="0 0 15 15"><polygon points="1,3 3.5,0.5 14,0.5 14,11.5 11.5,14 1,14" fill="#fff278" stroke="#a85a10" stroke-width="1"/><polygon points="11.5,11 14,8.500 14,11.500 11.500,14" fill="#ffc800"/><rect x="5" y="1" width="8.500" height="9" fill="#fff"/><rect x="5" y="3" width="7" height="7" fill="#8ffcfc"/><polygon points="12,3 13.500,1.500 13.500,8.500 12,10" fill="#00c4c4"/><path d="M4.500,1 v9.500 h7.500" fill="none" stroke="#666" stroke-width="1"/><path d="M5,1 h8.500" stroke="#777" stroke-width="1"/></svg>
<span class="tt" style="left:43.0px;top:363px">AC-2-T01.ASM</span>
<svg class="ic" style="left:8.5px;top:388px" width="9" height="9" viewBox="0 0 9 9"><rect x=".5" y=".5" width="8" height="8" rx="1.5" fill="#eef4fa" stroke="#9ab0c8"/><path d="M2,4.500 h5" stroke="#333" stroke-width="1"/><path d="M4.500,2 v5" stroke="#333" stroke-width="1"/></svg>
<i class="hd" style="left:17.5px;top:392px;width:6px"></i>
<svg class="ic" style="left:24.5px;top:385px" width="15" height="15" viewBox="0 0 15 15"><polygon points="1,3 3.5,0.5 14,0.5 14,11.5 11.5,14 1,14" fill="#fff278" stroke="#a85a10" stroke-width="1"/><polygon points="11.5,11 14,8.500 14,11.500 11.500,14" fill="#ffc800"/><rect x="5" y="1" width="8.500" height="9" fill="#fff"/><rect x="5" y="3" width="7" height="7" fill="#8ffcfc"/><polygon points="12,3 13.500,1.500 13.500,8.500 12,10" fill="#00c4c4"/><path d="M4.500,1 v9.500 h7.500" fill="none" stroke="#666" stroke-width="1"/><path d="M5,1 h8.500" stroke="#777" stroke-width="1"/></svg>
<span class="tt" style="left:43.0px;top:383px">AC-5-T07.ASM</span>
<svg class="ic" style="left:8.5px;top:408px" width="9" height="9" viewBox="0 0 9 9"><rect x=".5" y=".5" width="8" height="8" rx="1.5" fill="#eef4fa" stroke="#9ab0c8"/><path d="M2,4.500 h5" stroke="#333" stroke-width="1"/><path d="M4.500,2 v5" stroke="#333" stroke-width="1"/></svg>
<i class="hd" style="left:17.5px;top:412px;width:6px"></i>
<svg class="ic" style="left:24.5px;top:405px" width="15" height="15" viewBox="0 0 15 15"><polygon points="1,3 3.5,0.5 14,0.5 14,11.5 11.5,14 1,14" fill="#fff278" stroke="#a85a10" stroke-width="1"/><polygon points="11.5,11 14,8.500 14,11.500 11.500,14" fill="#ffc800"/><rect x="5" y="1" width="8.500" height="9" fill="#fff"/><rect x="5" y="3" width="7" height="7" fill="#8ffcfc"/><polygon points="12,3 13.500,1.500 13.500,8.500 12,10" fill="#00c4c4"/><path d="M4.500,1 v9.500 h7.500" fill="none" stroke="#666" stroke-width="1"/><path d="M5,1 h8.500" stroke="#777" stroke-width="1"/></svg>
<span class="tt" style="left:43.0px;top:403px">AC-5-T07.ASM</span>
<svg class="ic" style="left:8.5px;top:428px" width="9" height="9" viewBox="0 0 9 9"><rect x=".5" y=".5" width="8" height="8" rx="1.5" fill="#eef4fa" stroke="#9ab0c8"/><path d="M2,4.500 h5" stroke="#333" stroke-width="1"/><path d="M4.500,2 v5" stroke="#333" stroke-width="1"/></svg>
<i class="hd" style="left:17.5px;top:432px;width:6px"></i>
<svg class="ic" style="left:24.5px;top:425px" width="15" height="15" viewBox="0 0 15 15"><polygon points="1,3 3.5,0.5 14,0.5 14,11.5 11.5,14 1,14" fill="#fff278" stroke="#a85a10" stroke-width="1"/><polygon points="11.5,11 14,8.500 14,11.500 11.500,14" fill="#ffc800"/><rect x="5" y="1" width="8.500" height="9" fill="#fff"/><rect x="5" y="3" width="7" height="7" fill="#8ffcfc"/><polygon points="12,3 13.500,1.500 13.500,8.500 12,10" fill="#00c4c4"/><path d="M4.500,1 v9.500 h7.500" fill="none" stroke="#666" stroke-width="1"/><path d="M5,1 h8.500" stroke="#777" stroke-width="1"/></svg>
<span class="tt" style="left:43.0px;top:423px">AC-5-T07.ASM</span>
<svg class="ic" style="left:8.5px;top:448px" width="9" height="9" viewBox="0 0 9 9"><rect x=".5" y=".5" width="8" height="8" rx="1.5" fill="#eef4fa" stroke="#9ab0c8"/><path d="M2,4.500 h5" stroke="#333" stroke-width="1"/></svg>
<i class="hd" style="left:17.5px;top:452px;width:6px"></i>
<svg class="ic" style="left:24.5px;top:445px" width="15" height="15" viewBox="0 0 15 15"><polygon points="1,3 3.5,0.5 14,0.5 14,11.5 11.5,14 1,14" fill="#fff278" stroke="#a85a10" stroke-width="1"/><polygon points="11.5,11 14,8.500 14,11.500 11.500,14" fill="#ffc800"/><rect x="5" y="1" width="8.500" height="9" fill="#fff"/><rect x="5" y="3" width="7" height="7" fill="#8ffcfc"/><polygon points="12,3 13.500,1.500 13.500,8.500 12,10" fill="#00c4c4"/><path d="M4.500,1 v9.500 h7.500" fill="none" stroke="#666" stroke-width="1"/><path d="M5,1 h8.500" stroke="#777" stroke-width="1"/></svg>
<span class="tt" style="left:43.0px;top:443px">AC-5-T07.ASM</span>
<i class="hd" style="left:32.5px;top:472px;width:11px"></i>
<svg class="ic" style="left:43.5px;top:464px" width="16" height="16" viewBox="0 0 16 16"><rect x="0" y="0" width="16" height="16" fill="#d8d8d0"/><rect x="2.500" y="2.500" width="8" height="8" fill="none" stroke="#a8a8a0"/><rect x="5.500" y="5.500" width="8" height="8" fill="none" stroke="#a8a8a0"/><rect x="2.500" y="2.500" width="11" height="11" fill="none" stroke="#a8a8a0"/></svg>
<span class="tt g" style="left:63.0px;top:463px">AC-5-T07_SKEL.PRT</span>
<i class="hd" style="left:32.5px;top:492px;width:11px"></i>
<svg class="ic" style="left:44.5px;top:485px" width="15" height="15" viewBox="0 0 15 15"><polygon points="1.5,3.5 3.5,1.5 13.5,1.5 13.5,11.5 11.5,13.5 1.5,13.5" fill="#fff" stroke="#555" stroke-width="1"/><rect x="1.5" y="3.5" width="10" height="10" fill="#7ff4f4" stroke="#555" stroke-width="1"/><polygon points="11.5,3.5 13.5,1.5 13.5,11.5 11.5,13.5" fill="#4a5a5a"/></svg>
<span class="tt" style="left:63.0px;top:483px">AC-5-T07.PRT</span>
<i class="hd" style="left:32.5px;top:512px;width:11px"></i>
<svg class="ic" style="left:44.5px;top:505px" width="15" height="15" viewBox="0 0 15 15"><polygon points="1.5,3.5 3.5,1.5 13.5,1.5 13.5,11.5 11.5,13.5 1.5,13.5" fill="#fff" stroke="#555" stroke-width="1"/><rect x="1.5" y="3.5" width="10" height="10" fill="#7ff4f4" stroke="#555" stroke-width="1"/><polygon points="11.5,3.5 13.5,1.5 13.5,11.5 11.5,13.5" fill="#4a5a5a"/></svg>
<span class="tt" style="left:63.0px;top:503px">AC-5-LT.PRT</span>
<i class="hd" style="left:32.5px;top:532px;width:11px"></i>
<svg class="ic" style="left:44.5px;top:525px" width="15" height="15" viewBox="0 0 15 15"><polygon points="1.5,3.5 3.5,1.5 13.5,1.5 13.5,11.5 11.5,13.5 1.5,13.5" fill="#fff" stroke="#555" stroke-width="1"/><rect x="1.5" y="3.5" width="10" height="10" fill="#7ff4f4" stroke="#555" stroke-width="1"/><polygon points="11.5,3.5 13.5,1.5 13.5,11.5 11.5,13.5" fill="#4a5a5a"/></svg>
<span class="tt" style="left:63.0px;top:523px">AC-5-B07.PRT</span>
<i class="hd" style="left:32.5px;top:552px;width:11px"></i>
<svg class="ic" style="left:44.5px;top:545px" width="15" height="15" viewBox="0 0 15 15"><polygon points="1.5,3.5 3.5,1.5 13.5,1.5 13.5,11.5 11.5,13.5 1.5,13.5" fill="#fff" stroke="#555" stroke-width="1"/><rect x="1.5" y="3.5" width="10" height="10" fill="#7ff4f4" stroke="#555" stroke-width="1"/><polygon points="11.5,3.5 13.5,1.5 13.5,11.5 11.5,13.5" fill="#4a5a5a"/></svg>
<span class="tt" style="left:63.0px;top:543px">PA3-10.PRT</span>
<i class="hd" style="left:32.5px;top:572px;width:11px"></i>
<svg class="ic" style="left:44.5px;top:565px" width="15" height="15" viewBox="0 0 15 15"><polygon points="1.5,3.5 3.5,1.5 13.5,1.5 13.5,11.5 11.5,13.5 1.5,13.5" fill="#fff" stroke="#555" stroke-width="1"/><rect x="1.5" y="3.5" width="10" height="10" fill="#7ff4f4" stroke="#555" stroke-width="1"/><polygon points="11.5,3.5 13.5,1.5 13.5,11.5 11.5,13.5" fill="#4a5a5a"/></svg>
<span class="tt" style="left:63.0px;top:563px">PA3-10.PRT</span>
<svg class="ic" style="left:8.5px;top:588px" width="9" height="9" viewBox="0 0 9 9"><rect x=".5" y=".5" width="8" height="8" rx="1.5" fill="#eef4fa" stroke="#9ab0c8"/><path d="M2,4.500 h5" stroke="#333" stroke-width="1"/><path d="M4.500,2 v5" stroke="#333" stroke-width="1"/></svg>
<i class="hd" style="left:17.5px;top:592px;width:6px"></i>
<svg class="ic" style="left:24.5px;top:585px" width="15" height="15" viewBox="0 0 15 15"><polygon points="1,3 3.5,0.5 14,0.5 14,11.5 11.5,14 1,14" fill="#fff278" stroke="#a85a10" stroke-width="1"/><polygon points="11.5,11 14,8.500 14,11.500 11.500,14" fill="#ffc800"/><rect x="5" y="1" width="8.500" height="9" fill="#fff"/><rect x="5" y="3" width="7" height="7" fill="#8ffcfc"/><polygon points="12,3 13.500,1.500 13.500,8.500 12,10" fill="#00c4c4"/><path d="M4.500,1 v9.500 h7.500" fill="none" stroke="#666" stroke-width="1"/><path d="M5,1 h8.500" stroke="#777" stroke-width="1"/></svg>
<span class="tt" style="left:43.0px;top:583px">KG-2012.ASM</span>
<svg class="ic" style="left:8.5px;top:608px" width="9" height="9" viewBox="0 0 9 9"><rect x=".5" y=".5" width="8" height="8" rx="1.5" fill="#eef4fa" stroke="#9ab0c8"/><path d="M2,4.500 h5" stroke="#333" stroke-width="1"/><path d="M4.500,2 v5" stroke="#333" stroke-width="1"/></svg>
<i class="hd" style="left:17.5px;top:612px;width:6px"></i>
<svg class="ic" style="left:24.5px;top:605px" width="15" height="15" viewBox="0 0 15 15"><polygon points="1,3 3.5,0.5 14,0.5 14,11.5 11.5,14 1,14" fill="#fff278" stroke="#a85a10" stroke-width="1"/><polygon points="11.5,11 14,8.500 14,11.500 11.500,14" fill="#ffc800"/><rect x="5" y="1" width="8.500" height="9" fill="#fff"/><rect x="5" y="3" width="7" height="7" fill="#8ffcfc"/><polygon points="12,3 13.500,1.500 13.500,8.500 12,10" fill="#00c4c4"/><path d="M4.500,1 v9.500 h7.500" fill="none" stroke="#666" stroke-width="1"/><path d="M5,1 h8.500" stroke="#777" stroke-width="1"/></svg>
<span class="tt" style="left:43.0px;top:603px">AC-X-8.ASM</span>
<i class="hd" style="left:12.5px;top:632px;width:11px"></i>
<svg class="ic" style="left:24.5px;top:625px" width="15" height="15" viewBox="0 0 15 15"><polygon points="1.5,3.5 3.5,1.5 13.5,1.5 13.5,11.5 11.5,13.5 1.5,13.5" fill="#fff" stroke="#555" stroke-width="1"/><rect x="1.5" y="3.5" width="10" height="10" fill="#7ff4f4" stroke="#555" stroke-width="1"/><polygon points="11.5,3.5 13.5,1.5 13.5,11.5 11.5,13.5" fill="#4a5a5a"/></svg>
<span class="tt" style="left:43.0px;top:623px">AC-LED.PRT</span>
<svg class="ic" style="left:8.5px;top:648px" width="9" height="9" viewBox="0 0 9 9"><rect x=".5" y=".5" width="8" height="8" rx="1.5" fill="#eef4fa" stroke="#9ab0c8"/><path d="M2,4.500 h5" stroke="#333" stroke-width="1"/><path d="M4.500,2 v5" stroke="#333" stroke-width="1"/></svg>
<i class="hd" style="left:17.5px;top:652px;width:6px"></i>
<svg class="ic" style="left:23.5px;top:644px" width="16" height="16" viewBox="0 0 16 16"><rect x="0" y="0" width="16" height="16" fill="#d8d8d0"/><path d="M2,5 h8 v3 h-8 z M7,8 l3,0 l-3,6 l-2,-1 z" fill="#f0f0e8" stroke="#b0b0a8" stroke-width=".8"/><circle cx="11.500" cy="4.500" r="2.500" fill="none" stroke="#fff" stroke-width="1.3"/></svg>
<span class="tt g" style="left:43.0px;top:643px">组螺丝塞</span>
<svg class="ic" style="left:8.5px;top:668px" width="9" height="9" viewBox="0 0 9 9"><rect x=".5" y=".5" width="8" height="8" rx="1.5" fill="#eef4fa" stroke="#9ab0c8"/><path d="M2,4.500 h5" stroke="#333" stroke-width="1"/></svg>
<i class="hd" style="left:17.5px;top:672px;width:6px"></i>
<svg class="ic" style="left:24.5px;top:665px" width="15" height="15" viewBox="0 0 15 15"><polygon points="1,3 3.5,0.5 14,0.5 14,11.5 11.5,14 1,14" fill="#fff278" stroke="#a85a10" stroke-width="1"/><polygon points="11.5,11 14,8.500 14,11.500 11.500,14" fill="#ffc800"/><rect x="5" y="1" width="8.500" height="9" fill="#fff"/><rect x="5" y="3" width="7" height="7" fill="#8ffcfc"/><polygon points="12,3 13.500,1.500 13.500,8.500 12,10" fill="#00c4c4"/><path d="M4.500,1 v9.500 h7.500" fill="none" stroke="#666" stroke-width="1"/><path d="M5,1 h8.500" stroke="#777" stroke-width="1"/></svg>
<span class="tt" style="left:43.0px;top:663px">XIAN.ASM</span>
<i class="hd" style="left:32.5px;top:692px;width:11px"></i>
<svg class="ic" style="left:44.5px;top:685px" width="15" height="15" viewBox="0 0 15 15"><polygon points="1.5,3.5 3.5,1.5 13.5,1.5 13.5,11.5 11.5,13.5 1.5,13.5" fill="#fff" stroke="#555" stroke-width="1"/><rect x="1.5" y="3.5" width="10" height="10" fill="#7ff4f4" stroke="#555" stroke-width="1"/><polygon points="11.5,3.5 13.5,1.5 13.5,11.5 11.5,13.5" fill="#4a5a5a"/></svg>
<span class="tt" style="left:63.0px;top:683px">AC-HUO.PRT</span>
<i class="hd" style="left:32.5px;top:712px;width:11px"></i>
<svg class="ic" style="left:44.5px;top:705px" width="15" height="15" viewBox="0 0 15 15"><polygon points="1.5,3.5 3.5,1.5 13.5,1.5 13.5,11.5 11.5,13.5 1.5,13.5" fill="#fff" stroke="#555" stroke-width="1"/><rect x="1.5" y="3.5" width="10" height="10" fill="#7ff4f4" stroke="#555" stroke-width="1"/><polygon points="11.5,3.5 13.5,1.5 13.5,11.5 11.5,13.5" fill="#4a5a5a"/></svg>
<span class="tt" style="left:63.0px;top:703px">AC-LING.PRT</span>
<i class="hd" style="left:32.5px;top:732px;width:11px"></i>
<svg class="ic" style="left:44.5px;top:725px" width="15" height="15" viewBox="0 0 15 15"><polygon points="1.5,3.5 3.5,1.5 13.5,1.5 13.5,11.5 11.5,13.5 1.5,13.5" fill="#fff" stroke="#555" stroke-width="1"/><rect x="1.5" y="3.5" width="10" height="10" fill="#7ff4f4" stroke="#555" stroke-width="1"/><polygon points="11.5,3.5 13.5,1.5 13.5,11.5 11.5,13.5" fill="#4a5a5a"/></svg>
<span class="tt" style="left:63.0px;top:723px">AC-DX.PRT</span>
<svg class="ic" style="left:8.5px;top:748px" width="9" height="9" viewBox="0 0 9 9"><rect x=".5" y=".5" width="8" height="8" rx="1.5" fill="#eef4fa" stroke="#9ab0c8"/><path d="M2,4.500 h5" stroke="#333" stroke-width="1"/><path d="M4.500,2 v5" stroke="#333" stroke-width="1"/></svg>
<i class="hd" style="left:17.5px;top:752px;width:6px"></i>
<svg class="ic" style="left:23.5px;top:744px" width="16" height="16" viewBox="0 0 16 16"><rect x="0" y="0" width="16" height="16" fill="#d8d8d0"/><path d="M2,5 h8 v3 h-8 z M7,8 l3,0 l-3,6 l-2,-1 z" fill="#f0f0e8" stroke="#b0b0a8" stroke-width=".8"/><circle cx="11.500" cy="4.500" r="2.500" fill="none" stroke="#fff" stroke-width="1.3"/></svg>
<span class="tt g" style="left:43.0px;top:743px">组螺丝-外壳</span>
<i class="hd" style="left:12.5px;top:772px;width:11px"></i>
<svg class="ic" style="left:24.5px;top:765px" width="15" height="15" viewBox="0 0 15 15"><polygon points="1.5,3.5 3.5,1.5 13.5,1.5 13.5,11.5 11.5,13.5 1.5,13.5" fill="#fff" stroke="#555" stroke-width="1"/><rect x="1.5" y="3.5" width="10" height="10" fill="#7ff4f4" stroke="#555" stroke-width="1"/><polygon points="11.5,3.5 13.5,1.5 13.5,11.5 11.5,13.5" fill="#4a5a5a"/></svg>
<span class="tt" style="left:43.0px;top:763px">PA3-10.PRT</span>
<i class="hd" style="left:12.5px;top:792px;width:11px"></i>
<svg class="ic" style="left:24.5px;top:785px" width="15" height="15" viewBox="0 0 15 15"><polygon points="1.5,3.5 3.5,1.5 13.5,1.5 13.5,11.5 11.5,13.5 1.5,13.5" fill="#fff" stroke="#555" stroke-width="1"/><rect x="1.5" y="3.5" width="10" height="10" fill="#7ff4f4" stroke="#555" stroke-width="1"/><polygon points="11.5,3.5 13.5,1.5 13.5,11.5 11.5,13.5" fill="#4a5a5a"/></svg>
<span class="tt" style="left:43.0px;top:783px">PA3-10.PRT</span>
<i class="vd" style="left:12.5px;top:0;height:792px"></i>
<i class="vd" style="left:32.5px;top:0px;height:72px"></i>
<i class="vd" style="left:32.5px;top:100px;height:112px"></i>
<i class="vd" style="left:32.5px;top:240px;height:112px"></i>
<i class="vd" style="left:32.5px;top:460px;height:112px"></i>
<i class="vd" style="left:32.5px;top:680px;height:52px"></i>
<!--/TREE-->
<div id="sbar"><svg width="20" height="806" style="position:absolute;left:0;top:0"><path d="M4.500,13 l5,-6 l5,6z" fill="#8aa8c8"/><path d="M4.500,789 l5,6 l5,-6z" fill="#8aa8c8"/></svg><div id="sthumb"></div></div>
</div>
<div id="sash" class="abs"><div class="sh" style="top:340px;height:93px"><i></i></div><div class="sh" style="top:443px;height:93px"><i></i></div></div>
<div id="view" class="abs"></div>
<!--MODEL-->
<svg class="abs" style="left:304px;top:169px" width="1575" height="871" viewBox="304 169 1575 871">
<defs>
<linearGradient id="gBrass" x1="0" y1="0" x2="0" y2="1"><stop offset="0" stop-color="#8a7840"/><stop offset=".3" stop-color="#fff4bc"/><stop offset=".6" stop-color="#e8d490"/><stop offset="1" stop-color="#7a6838"/></linearGradient>
<linearGradient id="gCop" x1="0" y1="0" x2="0" y2="1"><stop offset="0" stop-color="#8a4c38"/><stop offset=".3" stop-color="#f4b89c"/><stop offset=".6" stop-color="#d89074"/><stop offset="1" stop-color="#7a4030"/></linearGradient>
<linearGradient id="gCyl" x1="0" y1="0" x2="0" y2="1"><stop offset="0" stop-color="#8a9094"/><stop offset=".35" stop-color="#e0e4e8"/><stop offset="1" stop-color="#70767a"/></linearGradient>
<linearGradient id="gCylH" x1="0" y1="0" x2="1" y2="0"><stop offset="0" stop-color="#7d8488"/><stop offset=".45" stop-color="#a4aaae"/><stop offset="1" stop-color="#8a9094"/></linearGradient>
<linearGradient id="gSil" x1="0" y1="0" x2="0" y2="1"><stop offset="0" stop-color="#70767c"/><stop offset=".45" stop-color="#ffffff"/><stop offset="1" stop-color="#80868c"/></linearGradient>
<linearGradient id="gClip" x1="0" y1="0" x2="0" y2="1"><stop offset="0" stop-color="#a57a50"/><stop offset=".4" stop-color="#e8bc8e"/><stop offset="1" stop-color="#5a3c22"/></linearGradient>
<linearGradient id="gPeg" x1="0" y1="0" x2="0" y2="1"><stop offset="0" stop-color="#3a3a3c"/><stop offset=".5" stop-color="#1c1c1e"/><stop offset="1" stop-color="#101010"/></linearGradient>
</defs>
<clipPath id="clip4"><rect x="300" y="700" width="500" height="221"/></clipPath>
<path d="M559.0,372.0 q1,-3 5,-2.5 l14,0 l3,4 l10,0 l3,4.5 l-7,0 q5,4 4,12 l-12,96 q-3,8 -12,8 l-6,-1 q-14,-9 -15.500,-24 z" fill="#0b0b0c"/>
<polygon points="580.0,377.0 588.0,381.0 590.0,390.0 578.0,482.0 570.0,489.0 566.0,488.0 570.0,470.0 581.0,390.0" fill="#29292b" />
<polygon points="565.0,394.0 571.0,391.0 570.0,420.0 561.0,412.0" fill="#2a2a2c" />
<polygon points="560.0,413.0 569.0,421.0 569.0,426.0 559.0,418.0" fill="#1c1c1e" />
<ellipse cx="558.5" cy="460.0" rx="4.8" ry="13.0" fill="#050505" transform="rotate(8 558.5 460.0)"/>
<ellipse cx="559.0" cy="464.0" rx="3.0" ry="8.0" fill="#5a5a5e" transform="rotate(8 559.0 464.0)"/>
<ellipse cx="557.5" cy="462.0" rx="2.6" ry="8.0" fill="#0c0c0c" transform="rotate(8 557.5 462.0)"/>
<polygon points="587.0,400.0 605.0,400.0 638.0,432.0 642.0,442.0 629.0,533.0 625.0,545.0 612.0,547.0 574.0,505.0 573.0,492.0" fill="#2d2d2f" />
<polygon points="588.0,402.0 600.0,402.0 628.0,433.0 629.0,441.0 617.0,534.0 611.0,543.0 576.0,503.0 575.0,492.0" fill="#1d1d1e" />
<polygon points="588.0,402.0 594.0,402.0 581.0,498.0 576.0,503.0 575.0,492.0" fill="#262628" />
<polygon points="593.0,422.0 598.0,426.0 598.0,450.0 588.0,440.0" fill="#3b3b3d" />
<polygon points="589.0,457.0 598.0,466.0 598.0,475.0 588.0,466.0" fill="#3b3b3d" />
<polygon points="582.0,479.0 590.0,484.0 590.0,500.0 585.0,506.0 581.0,498.0" fill="#333335" />
<polygon points="610.0,455.0 614.0,456.0 620.0,472.0 617.0,475.0" fill="#3e3e40" />
<polygon points="603.0,509.0 614.0,503.0 613.0,510.0 604.0,515.0" fill="#38383a" />
<rect x="640.5" y="438.0" width="15" height="26" rx="3" fill="url(#gPeg)"/>
<rect x="640.5" y="438.0" width="14.0" height="4.0" fill="#1a1a1c" />
<rect x="635.5" y="485.0" width="14" height="22" rx="3" fill="url(#gPeg)"/>
<rect x="634.0" y="505.0" width="10.0" height="7.0" fill="#242426" />
<path d="M538.4,510.4 q1,-3 5,-2.5 l14,0 l3,4 l10,0 l3,4.5 l-7,0 q5,4 4,12 l-12,96 q-3,8 -12,8 l-6,-1 q-14,-9 -15.500,-24 z" fill="#0b0b0c"/>
<polygon points="559.4,515.4 567.4,519.4 569.4,528.4 557.4,620.4 549.4,627.4 545.4,626.4 549.4,608.4 560.4,528.4" fill="#29292b" />
<polygon points="544.4,532.4 550.4,529.4 549.4,558.4 540.4,550.4" fill="#2a2a2c" />
<polygon points="539.4,551.4 548.4,559.4 548.4,564.4 538.4,556.4" fill="#1c1c1e" />
<ellipse cx="537.9" cy="598.4" rx="4.8" ry="13.0" fill="#050505" transform="rotate(8 537.9 598.4)"/>
<ellipse cx="538.4" cy="602.4" rx="3.0" ry="8.0" fill="#5a5a5e" transform="rotate(8 538.4 602.4)"/>
<ellipse cx="536.9" cy="600.4" rx="2.6" ry="8.0" fill="#0c0c0c" transform="rotate(8 536.9 600.4)"/>
<polygon points="566.4,538.4 584.4,538.4 617.4,570.4 621.4,580.4 608.4,671.4 604.4,683.4 591.4,685.4 553.4,643.4 552.4,630.4" fill="#2d2d2f" />
<polygon points="567.4,540.4 579.4,540.4 607.4,571.4 608.4,579.4 596.4,672.4 590.4,681.4 555.4,641.4 554.4,630.4" fill="#1d1d1e" />
<polygon points="567.4,540.4 573.4,540.4 560.4,636.4 555.4,641.4 554.4,630.4" fill="#262628" />
<polygon points="572.4,560.4 577.4,564.4 577.4,588.4 567.4,578.4" fill="#3b3b3d" />
<polygon points="568.4,595.4 577.4,604.4 577.4,613.4 567.4,604.4" fill="#3b3b3d" />
<polygon points="561.4,617.4 569.4,622.4 569.4,638.4 564.4,644.4 560.4,636.4" fill="#333335" />
<polygon points="589.4,593.4 593.4,594.4 599.4,610.4 596.4,613.4" fill="#3e3e40" />
<polygon points="582.4,647.4 593.4,641.4 592.4,648.4 583.4,653.4" fill="#38383a" />
<rect x="619.9" y="576.4" width="15" height="26" rx="3" fill="url(#gPeg)"/>
<rect x="619.9" y="576.4" width="14.0" height="4.0" fill="#1a1a1c" />
<rect x="614.9" y="623.4" width="14" height="22" rx="3" fill="url(#gPeg)"/>
<rect x="613.4" y="643.4" width="10.0" height="7.0" fill="#242426" />
<path d="M517.8,648.8 q1,-3 5,-2.5 l14,0 l3,4 l10,0 l3,4.5 l-7,0 q5,4 4,12 l-12,96 q-3,8 -12,8 l-6,-1 q-14,-9 -15.500,-24 z" fill="#0b0b0c"/>
<polygon points="538.8,653.8 546.8,657.8 548.8,666.8 536.8,758.8 528.8,765.8 524.8,764.8 528.8,746.8 539.8,666.8" fill="#29292b" />
<polygon points="523.8,670.8 529.8,667.8 528.8,696.8 519.8,688.8" fill="#2a2a2c" />
<polygon points="518.8,689.8 527.8,697.8 527.8,702.8 517.8,694.8" fill="#1c1c1e" />
<ellipse cx="517.3" cy="736.8" rx="4.8" ry="13.0" fill="#050505" transform="rotate(8 517.3 736.8)"/>
<ellipse cx="517.8" cy="740.8" rx="3.0" ry="8.0" fill="#5a5a5e" transform="rotate(8 517.8 740.8)"/>
<ellipse cx="516.3" cy="738.8" rx="2.6" ry="8.0" fill="#0c0c0c" transform="rotate(8 516.3 738.8)"/>
<polygon points="545.8,676.8 563.8,676.8 596.8,708.8 600.8,718.8 587.8,809.8 583.8,821.8 570.8,823.8 532.8,781.8 531.8,768.8" fill="#2d2d2f" />
<polygon points="546.8,678.8 558.8,678.8 586.8,709.8 587.8,717.8 575.8,810.8 569.8,819.8 534.8,779.8 533.8,768.8" fill="#1d1d1e" />
<polygon points="546.8,678.8 552.8,678.8 539.8,774.8 534.8,779.8 533.8,768.8" fill="#262628" />
<polygon points="551.8,698.8 556.8,702.8 556.8,726.8 546.8,716.8" fill="#3b3b3d" />
<polygon points="547.8,733.8 556.8,742.8 556.8,751.8 546.8,742.8" fill="#3b3b3d" />
<polygon points="540.8,755.8 548.8,760.8 548.8,776.8 543.8,782.8 539.8,774.8" fill="#333335" />
<polygon points="568.8,731.8 572.8,732.8 578.8,748.8 575.8,751.8" fill="#3e3e40" />
<polygon points="561.8,785.8 572.8,779.8 571.8,786.8 562.8,791.8" fill="#38383a" />
<rect x="599.3" y="714.8" width="15" height="26" rx="3" fill="url(#gPeg)"/>
<rect x="599.3" y="714.8" width="14.0" height="4.0" fill="#1a1a1c" />
<rect x="594.3" y="761.8" width="14" height="22" rx="3" fill="url(#gPeg)"/>
<rect x="592.8" y="781.8" width="10.0" height="7.0" fill="#242426" />
<g clip-path="url(#clip4)">
<path d="M497.2,787.2 q1,-3 5,-2.5 l14,0 l3,4 l10,0 l3,4.5 l-7,0 q5,4 4,12 l-12,96 q-3,8 -12,8 l-6,-1 q-14,-9 -15.500,-24 z" fill="#0b0b0c"/>
<polygon points="518.2,792.2 526.2,796.2 528.2,805.2 516.2,897.2 508.2,904.2 504.2,903.2 508.2,885.2 519.2,805.2" fill="#29292b" />
<polygon points="503.2,809.2 509.2,806.2 508.2,835.2 499.2,827.2" fill="#2a2a2c" />
<polygon points="498.2,828.2 507.2,836.2 507.2,841.2 497.2,833.2" fill="#1c1c1e" />
<ellipse cx="496.7" cy="875.2" rx="4.8" ry="13.0" fill="#050505" transform="rotate(8 496.7 875.2)"/>
<ellipse cx="497.2" cy="879.2" rx="3.0" ry="8.0" fill="#5a5a5e" transform="rotate(8 497.2 879.2)"/>
<ellipse cx="495.7" cy="877.2" rx="2.6" ry="8.0" fill="#0c0c0c" transform="rotate(8 495.7 877.2)"/>
<polygon points="525.2,815.2 543.2,815.2 576.2,847.2 580.2,857.2 567.2,948.2 563.2,960.2 550.2,962.2 512.2,920.2 511.2,907.2" fill="#2d2d2f" />
<polygon points="526.2,817.2 538.2,817.2 566.2,848.2 567.2,856.2 555.2,949.2 549.2,958.2 514.2,918.2 513.2,907.2" fill="#1d1d1e" />
<polygon points="526.2,817.2 532.2,817.2 519.2,913.2 514.2,918.2 513.2,907.2" fill="#262628" />
<polygon points="531.2,837.2 536.2,841.2 536.2,865.2 526.2,855.2" fill="#3b3b3d" />
<polygon points="527.2,872.2 536.2,881.2 536.2,890.2 526.2,881.2" fill="#3b3b3d" />
<polygon points="520.2,894.2 528.2,899.2 528.2,915.2 523.2,921.2 519.2,913.2" fill="#333335" />
<polygon points="548.2,870.2 552.2,871.2 558.2,887.2 555.2,890.2" fill="#3e3e40" />
<polygon points="541.2,924.2 552.2,918.2 551.2,925.2 542.2,930.2" fill="#38383a" />
<rect x="578.7" y="853.2" width="15" height="26" rx="3" fill="url(#gPeg)"/>
<rect x="578.7" y="853.2" width="14.0" height="4.0" fill="#1a1a1c" />
<rect x="573.7" y="900.2" width="14" height="22" rx="3" fill="url(#gPeg)"/>
<rect x="572.2" y="920.2" width="10.0" height="7.0" fill="#242426" />
</g>
<polygon points="522.4,935.0 569.7,935.0 566.5,959.5 547.0,961.0" fill="#1c1c1d" />
<polygon points="553.0,935.0 569.7,935.0 566.5,959.5 560.0,960.0" fill="#2b2b2d" />
<rect x="662.0" y="427.0" width="26.0" height="10.0" fill="url(#gBrass)" />
<path d="M692.5,422.7 a7.0,8.9 0 0 1 0,17.8 l-3,0 l0,-17.8 z" fill="url(#gBrass)"/>
<ellipse cx="695.0" cy="431.6" rx="2.6" ry="8.4" fill="#b09a50" opacity=".55"/>
<rect x="707.6" y="449.6" width="25.9" height="9.8" fill="url(#gCop)" />
<path d="M737.6,444.8 a6.6,9.6 0 0 1 0,19.2 l-3,0 l0,-19.2 z" fill="url(#gCop)"/>
<ellipse cx="740.1" cy="454.4" rx="2.6" ry="9.1" fill="#a05840" opacity=".55"/>
<rect x="702.0" y="490.0" width="25.0" height="10.0" fill="url(#gCop)" />
<path d="M731.1,486.0 a6.7,9.4 0 0 1 0,18.8 l-3,0 l0,-18.8 z" fill="url(#gCop)"/>
<ellipse cx="733.6" cy="495.4" rx="2.6" ry="8.9" fill="#a05840" opacity=".55"/>
<rect x="641.5" y="565.0" width="26.0" height="10.0" fill="url(#gBrass)" />
<path d="M672.0,560.7 a7.0,8.9 0 0 1 0,17.8 l-3,0 l0,-17.8 z" fill="url(#gBrass)"/>
<ellipse cx="674.5" cy="569.6" rx="2.6" ry="8.4" fill="#b09a50" opacity=".55"/>
<rect x="687.1" y="587.6" width="25.9" height="9.8" fill="url(#gCop)" />
<path d="M717.1,582.8 a6.6,9.6 0 0 1 0,19.2 l-3,0 l0,-19.2 z" fill="url(#gCop)"/>
<ellipse cx="719.6" cy="592.4" rx="2.6" ry="9.1" fill="#a05840" opacity=".55"/>
<rect x="681.5" y="628.0" width="25.0" height="10.0" fill="url(#gCop)" />
<path d="M710.6,624.0 a6.7,9.4 0 0 1 0,18.8 l-3,0 l0,-18.8 z" fill="url(#gCop)"/>
<ellipse cx="713.1" cy="633.4" rx="2.6" ry="8.9" fill="#a05840" opacity=".55"/>
<rect x="621.0" y="703.0" width="26.0" height="10.0" fill="url(#gBrass)" />
<path d="M651.5,698.7 a7.0,8.9 0 0 1 0,17.8 l-3,0 l0,-17.8 z" fill="url(#gBrass)"/>
<ellipse cx="654.0" cy="707.6" rx="2.6" ry="8.4" fill="#b09a50" opacity=".55"/>
<rect x="666.6" y="725.6" width="25.9" height="9.8" fill="url(#gCop)" />
<path d="M696.6,720.8 a6.6,9.6 0 0 1 0,19.2 l-3,0 l0,-19.2 z" fill="url(#gCop)"/>
<ellipse cx="699.1" cy="730.4" rx="2.6" ry="9.1" fill="#a05840" opacity=".55"/>
<rect x="661.0" y="766.0" width="25.0" height="10.0" fill="url(#gCop)" />
<path d="M690.1,762.0 a6.7,9.4 0 0 1 0,18.8 l-3,0 l0,-18.8 z" fill="url(#gCop)"/>
<ellipse cx="692.6" cy="771.4" rx="2.6" ry="8.9" fill="#a05840" opacity=".55"/>
<rect x="600.5" y="841.0" width="26.0" height="10.0" fill="url(#gBrass)" />
<path d="M631.0,836.7 a7.0,8.9 0 0 1 0,17.8 l-3,0 l0,-17.8 z" fill="url(#gBrass)"/>
<ellipse cx="633.5" cy="845.6" rx="2.6" ry="8.4" fill="#b09a50" opacity=".55"/>
<rect x="646.1" y="863.6" width="25.9" height="9.8" fill="url(#gCop)" />
<path d="M676.1,858.8 a6.6,9.6 0 0 1 0,19.2 l-3,0 l0,-19.2 z" fill="url(#gCop)"/>
<ellipse cx="678.6" cy="868.4" rx="2.6" ry="9.1" fill="#a05840" opacity=".55"/>
<rect x="640.5" y="904.0" width="25.0" height="10.0" fill="url(#gCop)" />
<path d="M669.6,900.0 a6.7,9.4 0 0 1 0,18.8 l-3,0 l0,-18.8 z" fill="url(#gCop)"/>
<ellipse cx="672.1" cy="909.4" rx="2.6" ry="8.9" fill="#a05840" opacity=".55"/>
<path d="M1299,187 L1302,181 L1310,171.5 L1337,172 Q1350,176 1358,188 L1430,262 Q1444,274 1445,290 L1399,600 L1352,930 Q1346,985 1331,1010 Q1316,1031 1283,1034 L1192,933 Z" fill="#0079a9"/>
<polygon points="1328.0,188.0 1340.0,190.0 1352.0,198.0 1364.0,209.0 1385.0,237.0 1398.0,262.0 1397.0,283.0 1352.6,600.0 1297.8,1000.0 1288.0,1018.0 1262.0,990.0 1225.0,930.0 1248.9,930.0 1296.3,600.0 1350.5,222.0 1337.0,215.0" fill="#004b68" />
<linearGradient id="gEnd" gradientUnits="userSpaceOnUse" x1="1290" y1="870" x2="1262" y2="985"><stop offset="0" stop-color="#004b68" stop-opacity="0"/><stop offset=".5" stop-color="#0080b2"/><stop offset="1" stop-color="#0092ca"/></linearGradient>
<path d="M1259.0,860 L1317.0,860 L1297.8,1000 L1290,1019 L1283,1034 L1192,933 L1204,922 L1248.9,930 Z" fill="url(#gEnd)"/>
<path d="M1194,925 Q1225,925 1245,898" fill="none" stroke="#18b8f0" stroke-width="3"/>
<path d="M1198,915 Q1222,915 1238,893" fill="none" stroke="#0a9ad6" stroke-width="2"/>
<polygon points="1333.0,200.0 1338.0,200.0 1240.0,900.0 1235.0,900.0" fill="#00587c" />
<polygon points="1338.0,200.0 1341.0,200.0 1243.0,900.0 1240.0,900.0" fill="#0a88bc" />
<polygon points="1328.0,200.0 1331.0,200.0 1233.0,900.0 1230.0,900.0" fill="#0a84b6" />
<polygon points="1345.3,215.0 1348.3,215.0 1251.0,900.0 1248.0,900.0" fill="#0a84b6" />
<polyline points="1367.0,228.0 1376.0,236.0 1382.0,250.0 1393.0,262.0 1392.0,276.0 1397.0,282.0 1389.6,330.0 1297.8,1000.0 1290.0,1019.0" fill="none" stroke="#8a9298" stroke-width="1.8" />
<polyline points="1391.1,330.0 1299.3,1000.0" fill="none" stroke="#00587c" stroke-width="1.5" />
<polyline points="1367.0,228.0 1376.0,236.0" fill="none" stroke="#c0c6ca" stroke-width="2" />
<polyline points="1192.0,933.0 1283.0,1033.0" fill="none" stroke="#8a9298" stroke-width="1.5" />
<polyline points="1283.0,1033.0 1287.0,1026.0 1291.0,1019.0" fill="none" stroke="#c0c6ca" stroke-width="1.3" />
<polyline points="1433.2,300.0 1339.2,960.0" fill="none" stroke="#006a96" stroke-width="2" />
<polyline points="1437.2,300.0 1343.2,960.0" fill="none" stroke="#00658f" stroke-width="1.6" />
<polyline points="1441.2,300.0 1347.2,960.0" fill="none" stroke="#006a96" stroke-width="1.5" />
<path d="M1390,236 Q1422,236 1440,272 L1443,290 Q1428,262 1396,258 Z" fill="#0898d2"/>
<path d="M1394,246 Q1420,248 1436,276" fill="none" stroke="#20b0ea" stroke-width="3"/>
<path d="M1397,262 Q1420,266 1432,290" fill="none" stroke="#10a0dc" stroke-width="2"/>
<path d="M1343.1,930 Q1338,985 1290,1024" fill="none" stroke="#006088" stroke-width="2"/>
<path d="M1335.1,930 Q1330,980 1290,1018" fill="none" stroke="#0a8cc4" stroke-width="1.5"/>
<polyline points="1300.0,186.0 1304.0,183.0 1306.0,188.0 1310.0,177.0 1318.0,184.0 1325.0,178.0 1334.0,189.0 1340.0,193.0" fill="none" stroke="#9aa0a4" stroke-width="1.5" />
<polygon points="1299.0,187.0 1301.0,186.0 1192.5,932.0 1191.0,932.0" fill="#00506e" />
<path d="M1348,194 Q1352,189 1364,190 Q1380,192 1381,200 L1381,210 Q1376,214 1366,213 L1364,204 Q1354,206 1348,202 Z" fill="#9aa0a4"/>
<ellipse cx="1365.0" cy="198.0" rx="10.0" ry="5.0" fill="#7d8488" />
<ellipse cx="1362.0" cy="199.0" rx="8.0" ry="4.5" fill="#a6acb0" />
<polygon points="1364.0,204.0 1381.0,201.0 1381.0,210.0 1376.0,214.0 1366.0,213.0" fill="#8e9498" />
<rect x="1307.5" y="202.5" width="52.5" height="20.0" fill="url(#gCyl)" />
<ellipse cx="1308.5" cy="212.5" rx="4.0" ry="10.0" fill="#8a9094" />
<ellipse cx="1309.0" cy="212.5" rx="1.6" ry="3.2" fill="#d8dcde" />
<rect x="1248.0" y="614.0" width="50.0" height="22.0" fill="url(#gCyl)" />
<ellipse cx="1249.0" cy="625.0" rx="4.0" ry="11.0" fill="#8a9094" />
<ellipse cx="1249.5" cy="625.0" rx="1.6" ry="3.2" fill="#d8dcde" />
<rect x="1204.0" y="900.0" width="52.0" height="22.0" fill="url(#gCyl)" />
<ellipse cx="1205.0" cy="911.0" rx="4.0" ry="11.0" fill="#8a9094" />
<ellipse cx="1205.5" cy="911.0" rx="1.6" ry="3.2" fill="#d8dcde" />
<rect x="1324.0" y="694.0" width="11" height="20" rx="5" fill="#a4aaae"/>
<ellipse cx="1328.0" cy="704.0" rx="3.2" ry="7.0" fill="#8a9094" />
<ellipse cx="1328.0" cy="704.0" rx="1.5" ry="3.4" fill="#d0d4d6" />
<rect x="1281.0" y="977.0" width="11" height="20" rx="5" fill="#a4aaae"/>
<ellipse cx="1285.0" cy="987.0" rx="3.2" ry="7.0" fill="#8a9094" />
<ellipse cx="1285.0" cy="987.0" rx="1.5" ry="3.4" fill="#d0d4d6" />
<ellipse cx="1385.0" cy="706.0" rx="2.5" ry="8.0" fill="#a4aaae" />
<ellipse cx="1342.0" cy="990.0" rx="2.5" ry="8.0" fill="#a4aaae" />
<ellipse cx="1446.5" cy="295.0" rx="2.0" ry="9.0" fill="#9aa0a4" />
<path d="M1372,284 Q1380,279 1398,282 L1400,290 L1388,350 Q1380,355 1368,350 Q1362,340 1364,322 Q1366,296 1372,284 Z" fill="#a0a6aa"/>
<path d="M1374,287 Q1380,290 1378,305 Q1376,318 1376,335 Q1374,348 1368,346 Q1363,335 1366,318 Q1368,298 1374,287 Z" fill="#60666c"/>
<path d="M1374,287 Q1380,290 1378,305 Q1376,318 1376,335 Q1374,348 1368,346" fill="none" stroke="#d8dcde" stroke-width="1.2"/>
<ellipse cx="1388.0" cy="291.0" rx="5.0" ry="8.0" fill="#8a9094" />
<ellipse cx="1387.0" cy="291.0" rx="2.0" ry="4.0" fill="#e0e4e6" />
<polygon points="1380.0,322.0 1392.0,318.0 1388.0,350.0 1378.0,352.0" fill="#b4babe" />
<polygon points="1143.4,377.4 1198.7,377.4 1215.0,393.6 1159.6,393.6" fill="#a9b1b5" />
<polygon points="1159.6,393.6 1215.0,393.6 1214.0,420.0 1200.0,486.0 1147.2,484.3" fill="#b9c1c7" />
<polygon points="1159.6,393.6 1215.0,393.6 1215.0,397.0 1159.5,397.0" fill="#d0d6da" />
<polygon points="1143.4,377.4 1159.6,393.6 1147.2,484.3 1129.5,468.0" fill="#8f979d" />
<polygon points="1137.0,387.0 1141.0,390.0 1136.0,412.0 1134.0,409.0" fill="#565c64" />
<polygon points="1131.0,430.0 1135.0,433.0 1131.0,455.0 1128.0,452.0" fill="#565c64" />
<polygon points="1157.0,410.0 1161.0,413.0 1156.0,434.0 1154.0,431.0" fill="#6a7078" />
<polygon points="1151.0,450.0 1155.0,453.0 1151.0,476.0 1148.0,473.0" fill="#6a7078" />
<polygon points="1130.0,467.0 1147.2,484.3 1146.0,478.0 1131.0,463.0" fill="#c4cace" />
<polygon points="1170.0,402.2 1199.7,402.2 1209.0,411.0 1224.5,411.0 1261.7,448.0 1247.4,538.6 1225.4,539.6 1224.5,545.3 1195.9,544.4 1156.7,504.3" fill="#1b1b1d" />
<polygon points="1170.0,402.2 1199.7,402.2 1209.0,411.0 1224.5,411.0 1261.7,448.0 1211.0,442.3" fill="#0f0f10" />
<polygon points="1211.0,442.3 1261.7,448.0 1247.4,538.6 1225.4,539.6 1224.5,545.3 1195.9,544.4" fill="#252527" />
<polygon points="1170.0,402.2 1211.0,442.3 1195.9,544.4 1156.7,504.3" fill="#1b1b1d" />
<polygon points="1211.0,442.3 1240.0,442.5 1240.0,444.5 1212.0,444.5" fill="#4a4a4e" />
<polygon points="1240.0,447.0 1261.7,448.0 1261.5,451.0 1240.0,450.0" fill="#4a4a4e" />
<polygon points="1168.0,440.0 1194.0,440.0 1203.0,449.0 1200.0,462.0 1185.0,460.0 1168.0,443.0" fill="#0c0c0d" />
<polygon points="1165.0,463.0 1183.0,480.0 1181.0,492.0 1163.0,475.0" fill="#101011" />
<polygon points="1185.0,460.0 1200.0,462.0 1198.0,478.0 1183.0,480.0" fill="#2c2c2f" />
<polygon points="1194.0,420.0 1204.0,430.0 1202.0,445.0 1193.0,437.0" fill="#232325" />
<polygon points="1160.0,438.0 1164.0,441.0 1160.0,466.0 1157.0,462.0" fill="#0a0a0a" />
<polygon points="1170.0,402.2 1174.0,402.2 1161.0,505.0 1156.7,504.3" fill="#222224" />
<ellipse cx="1202.5" cy="454.0" rx="4.5" ry="11.0" fill="#08080a" transform="rotate(6 1202.5 454.0)"/>
<ellipse cx="1204.0" cy="454.0" rx="2.6" ry="9.0" fill="#5a5a60" transform="rotate(6 1204.0 454.0)"/>
<ellipse cx="1202.0" cy="454.0" rx="2.4" ry="8.5" fill="#111113" transform="rotate(6 1202.0 454.0)"/>
<ellipse cx="1196.0" cy="497.0" rx="4.3" ry="10.0" fill="#08080a" transform="rotate(6 1196.0 497.0)"/>
<ellipse cx="1197.5" cy="497.0" rx="2.5" ry="8.0" fill="#5a5a60" transform="rotate(6 1197.5 497.0)"/>
<ellipse cx="1195.5" cy="497.0" rx="2.3" ry="7.5" fill="#111113" transform="rotate(6 1195.5 497.0)"/>
<polygon points="1185.0,534.0 1196.0,545.0 1194.0,552.0 1183.0,541.0" fill="#141415" />
<polygon points="1122.4,515.8 1177.7,515.8 1194.0,532.0 1138.6,532.0" fill="#a9b1b5" />
<polygon points="1138.6,532.0 1194.0,532.0 1193.0,558.4 1179.0,624.4 1126.2,622.7" fill="#b9c1c7" />
<polygon points="1138.6,532.0 1194.0,532.0 1194.0,535.4 1138.5,535.4" fill="#d0d6da" />
<polygon points="1122.4,515.8 1138.6,532.0 1126.2,622.7 1108.5,606.4" fill="#8f979d" />
<polygon points="1116.0,525.4 1120.0,528.4 1115.0,550.4 1113.0,547.4" fill="#565c64" />
<polygon points="1110.0,568.4 1114.0,571.4 1110.0,593.4 1107.0,590.4" fill="#565c64" />
<polygon points="1136.0,548.4 1140.0,551.4 1135.0,572.4 1133.0,569.4" fill="#6a7078" />
<polygon points="1130.0,588.4 1134.0,591.4 1130.0,614.4 1127.0,611.4" fill="#6a7078" />
<polygon points="1109.0,605.4 1126.2,622.7 1125.0,616.4 1110.0,601.4" fill="#c4cace" />
<polygon points="1149.0,540.6 1178.7,540.6 1188.0,549.4 1203.5,549.4 1240.7,586.4 1226.4,677.0 1204.4,678.0 1203.5,683.7 1174.9,682.8 1135.7,642.7" fill="#1b1b1d" />
<polygon points="1149.0,540.6 1178.7,540.6 1188.0,549.4 1203.5,549.4 1240.7,586.4 1190.0,580.7" fill="#0f0f10" />
<polygon points="1190.0,580.7 1240.7,586.4 1226.4,677.0 1204.4,678.0 1203.5,683.7 1174.9,682.8" fill="#252527" />
<polygon points="1149.0,540.6 1190.0,580.7 1174.9,682.8 1135.7,642.7" fill="#1b1b1d" />
<polygon points="1190.0,580.7 1219.0,580.9 1219.0,582.9 1191.0,582.9" fill="#4a4a4e" />
<polygon points="1219.0,585.4 1240.7,586.4 1240.5,589.4 1219.0,588.4" fill="#4a4a4e" />
<polygon points="1147.0,578.4 1173.0,578.4 1182.0,587.4 1179.0,600.4 1164.0,598.4 1147.0,581.4" fill="#0c0c0d" />
<polygon points="1144.0,601.4 1162.0,618.4 1160.0,630.4 1142.0,613.4" fill="#101011" />
<polygon points="1164.0,598.4 1179.0,600.4 1177.0,616.4 1162.0,618.4" fill="#2c2c2f" />
<polygon points="1173.0,558.4 1183.0,568.4 1181.0,583.4 1172.0,575.4" fill="#232325" />
<polygon points="1139.0,576.4 1143.0,579.4 1139.0,604.4 1136.0,600.4" fill="#0a0a0a" />
<polygon points="1149.0,540.6 1153.0,540.6 1140.0,643.4 1135.7,642.7" fill="#222224" />
<ellipse cx="1181.5" cy="592.4" rx="4.5" ry="11.0" fill="#08080a" transform="rotate(6 1181.5 592.4)"/>
<ellipse cx="1183.0" cy="592.4" rx="2.6" ry="9.0" fill="#5a5a60" transform="rotate(6 1183.0 592.4)"/>
<ellipse cx="1181.0" cy="592.4" rx="2.4" ry="8.5" fill="#111113" transform="rotate(6 1181.0 592.4)"/>
<ellipse cx="1175.0" cy="635.4" rx="4.3" ry="10.0" fill="#08080a" transform="rotate(6 1175.0 635.4)"/>
<ellipse cx="1176.5" cy="635.4" rx="2.5" ry="8.0" fill="#5a5a60" transform="rotate(6 1176.5 635.4)"/>
<ellipse cx="1174.5" cy="635.4" rx="2.3" ry="7.5" fill="#111113" transform="rotate(6 1174.5 635.4)"/>
<polygon points="1164.0,672.4 1175.0,683.4 1173.0,690.4 1162.0,679.4" fill="#141415" />
<polygon points="1101.4,654.2 1156.7,654.2 1173.0,670.4 1117.6,670.4" fill="#a9b1b5" />
<polygon points="1117.6,670.4 1173.0,670.4 1172.0,696.8 1158.0,762.8 1105.2,761.1" fill="#b9c1c7" />
<polygon points="1117.6,670.4 1173.0,670.4 1173.0,673.8 1117.5,673.8" fill="#d0d6da" />
<polygon points="1101.4,654.2 1117.6,670.4 1105.2,761.1 1087.5,744.8" fill="#8f979d" />
<polygon points="1095.0,663.8 1099.0,666.8 1094.0,688.8 1092.0,685.8" fill="#565c64" />
<polygon points="1089.0,706.8 1093.0,709.8 1089.0,731.8 1086.0,728.8" fill="#565c64" />
<polygon points="1115.0,686.8 1119.0,689.8 1114.0,710.8 1112.0,707.8" fill="#6a7078" />
<polygon points="1109.0,726.8 1113.0,729.8 1109.0,752.8 1106.0,749.8" fill="#6a7078" />
<polygon points="1088.0,743.8 1105.2,761.1 1104.0,754.8 1089.0,739.8" fill="#c4cace" />
<polygon points="1128.0,679.0 1157.7,679.0 1167.0,687.8 1182.5,687.8 1219.7,724.8 1205.4,815.4 1183.4,816.4 1182.5,822.1 1153.9,821.2 1114.7,781.1" fill="#1b1b1d" />
<polygon points="1128.0,679.0 1157.7,679.0 1167.0,687.8 1182.5,687.8 1219.7,724.8 1169.0,719.1" fill="#0f0f10" />
<polygon points="1169.0,719.1 1219.7,724.8 1205.4,815.4 1183.4,816.4 1182.5,822.1 1153.9,821.2" fill="#252527" />
<polygon points="1128.0,679.0 1169.0,719.1 1153.9,821.2 1114.7,781.1" fill="#1b1b1d" />
<polygon points="1169.0,719.1 1198.0,719.3 1198.0,721.3 1170.0,721.3" fill="#4a4a4e" />
<polygon points="1198.0,723.8 1219.7,724.8 1219.5,727.8 1198.0,726.8" fill="#4a4a4e" />
<polygon points="1126.0,716.8 1152.0,716.8 1161.0,725.8 1158.0,738.8 1143.0,736.8 1126.0,719.8" fill="#0c0c0d" />
<polygon points="1123.0,739.8 1141.0,756.8 1139.0,768.8 1121.0,751.8" fill="#101011" />
<polygon points="1143.0,736.8 1158.0,738.8 1156.0,754.8 1141.0,756.8" fill="#2c2c2f" />
<polygon points="1152.0,696.8 1162.0,706.8 1160.0,721.8 1151.0,713.8" fill="#232325" />
<polygon points="1118.0,714.8 1122.0,717.8 1118.0,742.8 1115.0,738.8" fill="#0a0a0a" />
<polygon points="1128.0,679.0 1132.0,679.0 1119.0,781.8 1114.7,781.1" fill="#222224" />
<ellipse cx="1160.5" cy="730.8" rx="4.5" ry="11.0" fill="#08080a" transform="rotate(6 1160.5 730.8)"/>
<ellipse cx="1162.0" cy="730.8" rx="2.6" ry="9.0" fill="#5a5a60" transform="rotate(6 1162.0 730.8)"/>
<ellipse cx="1160.0" cy="730.8" rx="2.4" ry="8.5" fill="#111113" transform="rotate(6 1160.0 730.8)"/>
<ellipse cx="1154.0" cy="773.8" rx="4.3" ry="10.0" fill="#08080a" transform="rotate(6 1154.0 773.8)"/>
<ellipse cx="1155.5" cy="773.8" rx="2.5" ry="8.0" fill="#5a5a60" transform="rotate(6 1155.5 773.8)"/>
<ellipse cx="1153.5" cy="773.8" rx="2.3" ry="7.5" fill="#111113" transform="rotate(6 1153.5 773.8)"/>
<polygon points="1143.0,810.8 1154.0,821.8 1152.0,828.8 1141.0,817.8" fill="#141415" />
<polygon points="1080.4,792.6 1135.7,792.6 1152.0,808.8 1096.6,808.8" fill="#a9b1b5" />
<polygon points="1096.6,808.8 1152.0,808.8 1151.0,835.2 1137.0,901.2 1084.2,899.5" fill="#b9c1c7" />
<polygon points="1096.6,808.8 1152.0,808.8 1152.0,812.2 1096.5,812.2" fill="#d0d6da" />
<polygon points="1080.4,792.6 1096.6,808.8 1084.2,899.5 1066.5,883.2" fill="#8f979d" />
<polygon points="1074.0,802.2 1078.0,805.2 1073.0,827.2 1071.0,824.2" fill="#565c64" />
<polygon points="1068.0,845.2 1072.0,848.2 1068.0,870.2 1065.0,867.2" fill="#565c64" />
<polygon points="1094.0,825.2 1098.0,828.2 1093.0,849.2 1091.0,846.2" fill="#6a7078" />
<polygon points="1088.0,865.2 1092.0,868.2 1088.0,891.2 1085.0,888.2" fill="#6a7078" />
<polygon points="1067.0,882.2 1084.2,899.5 1083.0,893.2 1068.0,878.2" fill="#c4cace" />
<polygon points="1107.0,817.4 1136.7,817.4 1146.0,826.2 1161.5,826.2 1198.7,863.2 1184.4,953.8 1162.4,954.8 1161.5,960.5 1132.9,959.6 1093.7,919.5" fill="#1b1b1d" />
<polygon points="1107.0,817.4 1136.7,817.4 1146.0,826.2 1161.5,826.2 1198.7,863.2 1148.0,857.5" fill="#0f0f10" />
<polygon points="1148.0,857.5 1198.7,863.2 1184.4,953.8 1162.4,954.8 1161.5,960.5 1132.9,959.6" fill="#252527" />
<polygon points="1107.0,817.4 1148.0,857.5 1132.9,959.6 1093.7,919.5" fill="#1b1b1d" />
<polygon points="1148.0,857.5 1177.0,857.7 1177.0,859.7 1149.0,859.7" fill="#4a4a4e" />
<polygon points="1177.0,862.2 1198.7,863.2 1198.5,866.2 1177.0,865.2" fill="#4a4a4e" />
<polygon points="1105.0,855.2 1131.0,855.2 1140.0,864.2 1137.0,877.2 1122.0,875.2 1105.0,858.2" fill="#0c0c0d" />
<polygon points="1102.0,878.2 1120.0,895.2 1118.0,907.2 1100.0,890.2" fill="#101011" />
<polygon points="1122.0,875.2 1137.0,877.2 1135.0,893.2 1120.0,895.2" fill="#2c2c2f" />
<polygon points="1131.0,835.2 1141.0,845.2 1139.0,860.2 1130.0,852.2" fill="#232325" />
<polygon points="1097.0,853.2 1101.0,856.2 1097.0,881.2 1094.0,877.2" fill="#0a0a0a" />
<polygon points="1107.0,817.4 1111.0,817.4 1098.0,920.2 1093.7,919.5" fill="#222224" />
<ellipse cx="1139.5" cy="869.2" rx="4.5" ry="11.0" fill="#08080a" transform="rotate(6 1139.5 869.2)"/>
<ellipse cx="1141.0" cy="869.2" rx="2.6" ry="9.0" fill="#5a5a60" transform="rotate(6 1141.0 869.2)"/>
<ellipse cx="1139.0" cy="869.2" rx="2.4" ry="8.5" fill="#111113" transform="rotate(6 1139.0 869.2)"/>
<ellipse cx="1133.0" cy="912.2" rx="4.3" ry="10.0" fill="#08080a" transform="rotate(6 1133.0 912.2)"/>
<ellipse cx="1134.5" cy="912.2" rx="2.5" ry="8.0" fill="#5a5a60" transform="rotate(6 1134.5 912.2)"/>
<ellipse cx="1132.5" cy="912.2" rx="2.3" ry="7.5" fill="#111113" transform="rotate(6 1132.5 912.2)"/>
<polygon points="1122.0,949.2 1133.0,960.2 1131.0,967.2 1120.0,956.2" fill="#141415" />
<path d="M837.5,207.0 Q842.0,180.0 871.0,172.3 L909.0,172.3 L972.0,236.4 Q986.0,252.0 987.5,283.0 L974.0,380.0 L936.3,620.0 L902.0,860.0 L881.5,1013.0 Q878.0,1034.0 861.0,1035.0 L746.0,936.0 Q733.0,918.0 735.5,895.0 L737.0,860.0 L783.0,600.0 L804.6,460.0 Z" fill="#b9dfe3"/>
<clipPath id="cvclip"><path d="M839.5,207.0 Q844.0,182.0 872.0,174.3 L908.4,174.3 L970.0,237.6 Q984.0,252.0 985.5,283.0 L972.0,380.0 L934.3,620.0 L900.0,860.0 L879.5,1013.0 Q876.0,1032.0 861.0,1033.0 L748.0,935.0 Q735.0,918.0 737.5,895.0 L739.0,860.0 L785.0,600.0 L806.6,460.0 Z"/></clipPath><g clip-path="url(#cvclip)">
<polygon points="849.0,220.0 905.0,264.0 952.0,296.0 926.0,460.0 887.7,700.0 830.2,1000.0 850.0,1003.0 760.0,925.0 748.0,905.0 754.4,860.0 822.0,460.0 843.7,300.0" fill="#9b9b9b" />
<polygon points="930.0,292.0 953.0,296.0 981.0,283.0 985.0,290.0 962.0,460.0 923.7,700.0 886.6,900.0 877.0,1016.0 868.0,1022.0 852.0,1003.0 830.2,1000.0 887.7,700.0 926.0,460.0 934.5,400.0" fill="#d5d5d5" />
<polygon points="846.0,214.0 872.0,178.0 908.0,176.0 968.0,238.0 981.0,282.0 953.0,296.0 905.0,264.0" fill="#e4e6e6" />
<linearGradient id="gBev" gradientUnits="userSpaceOnUse" x1="852" y1="200" x2="905" y2="235"><stop offset="0" stop-color="#adadad"/><stop offset="1" stop-color="#e6e6e6"/></linearGradient>
<polygon points="846.0,216.0 852.0,190.0 872.0,178.0 908.0,176.0 920.0,192.0 896.0,238.0 905.0,264.0 870.0,238.0" fill="url(#gBev)" />
<polygon points="896.0,238.0 918.0,200.0 968.0,240.0 984.0,280.0 953.0,296.0 905.0,264.0" fill="#f3f3f3" />
<polygon points="905.0,264.0 930.0,262.0 972.0,262.0 984.0,282.0 953.0,296.0" fill="#dedede" />
<polygon points="836.2,230.0 852.2,230.0 745.6,905.0 729.6,905.0" fill="#b6dcdf" />
<polygon points="851.6,235.0 858.6,235.0 839.5,385.0 847.6,392.0 759.6,915.0 743.6,915.0" fill="#c9e6e8" />
<polygon points="861.2,395.0 876.2,395.0 785.6,930.0 770.6,930.0" fill="#cfe2e4" />
<polygon points="913.0,297.0 930.0,292.0 934.5,400.0 886.7,700.0 829.2,1000.0 804.2,1000.0 861.7,700.0 908.5,400.0" fill="#cde0e2" />
<linearGradient id="gBg" gradientUnits="userSpaceOnUse" x1="0" y1="169" x2="0" y2="1040"><stop offset="0" stop-color="#c6dcec"/><stop offset="1" stop-color="#5c7aa9"/></linearGradient>
<polygon points="868.0,415.0 874.0,414.0 893.0,436.0 880.5,534.0 853.0,506.0" fill="url(#gBg)" />
<polygon points="845.0,497.0 853.0,490.0 857.0,503.0 880.0,527.0 879.0,536.0 851.0,512.0" fill="#f6f6f6" />
<polygon points="851.0,512.0 879.0,536.0 877.0,545.0 848.0,520.0" fill="#a2a2a2" />
<polygon points="866.0,409.0 876.0,407.0 896.0,430.0 893.0,436.0 874.0,414.0 868.0,415.0" fill="#8e8e8e" />
<polygon points="847.4,551.5 853.4,550.5 872.4,572.5 859.9,670.5 832.4,642.5" fill="url(#gBg)" />
<polygon points="824.4,633.5 832.4,626.5 836.4,639.5 859.4,663.5 858.4,672.5 830.4,648.5" fill="#f6f6f6" />
<polygon points="830.4,648.5 858.4,672.5 856.4,681.5 827.4,656.5" fill="#a2a2a2" />
<polygon points="845.4,545.5 855.4,543.5 875.4,566.5 872.4,572.5 853.4,550.5 847.4,551.5" fill="#8e8e8e" />
<polygon points="826.8,688.0 832.8,687.0 851.8,709.0 839.3,807.0 811.8,779.0" fill="url(#gBg)" />
<polygon points="803.8,770.0 811.8,763.0 815.8,776.0 838.8,800.0 837.8,809.0 809.8,785.0" fill="#f6f6f6" />
<polygon points="809.8,785.0 837.8,809.0 835.8,818.0 806.8,793.0" fill="#a2a2a2" />
<polygon points="824.8,682.0 834.8,680.0 854.8,703.0 851.8,709.0 832.8,687.0 826.8,688.0" fill="#8e8e8e" />
<polygon points="806.2,824.5 812.2,823.5 831.2,845.5 818.7,943.5 791.2,915.5" fill="url(#gBg)" />
<polygon points="783.2,906.5 791.2,899.5 795.2,912.5 818.2,936.5 817.2,945.5 789.2,921.5" fill="#f6f6f6" />
<polygon points="789.2,921.5 817.2,945.5 815.2,954.5 786.2,929.5" fill="#a2a2a2" />
<polygon points="804.2,818.5 814.2,816.5 834.2,839.5 831.2,845.5 812.2,823.5 806.2,824.5" fill="#8e8e8e" />
<ellipse cx="872.0" cy="333.0" rx="17.0" ry="28.0" fill="#e8e8e8" transform="rotate(-8 872 333)"/>
<ellipse cx="874.0" cy="334.0" rx="13.0" ry="25.0" fill="url(#gBg)" transform="rotate(-8 874 334)"/>
<path d="M856,316 Q860,306 868,305" fill="none" stroke="#ffffff" stroke-width="3"/>
<polygon points="808.0,465.0 816.0,458.0 820.0,478.0 826.0,488.0 818.0,490.0" fill="#ffffff" />
<polygon points="787.4,601.5 795.4,594.5 799.4,614.5 805.4,624.5 797.4,626.5" fill="#ffffff" />
<polygon points="766.8,738.0 774.8,731.0 778.8,751.0 784.8,761.0 776.8,763.0" fill="#ffffff" />
<polygon points="746.2,874.5 754.2,867.5 758.2,887.5 764.2,897.5 756.2,899.5" fill="#ffffff" />
</g>
<g clip-path="url(#cvclip)"><path d="M838.5,207.0 Q843.0,181.0 871.5,173.3 L908.7,173.3 L971.0,237.0 Q985.0,252.0 986.5,283.0 L973.0,380.0 L935.3,620.0 L901.0,860.0 L880.5,1013.0 Q877.0,1033.0 861.0,1034.0 L747.0,935.5 Q734.0,918.0 736.5,895.0 L738.0,860.0 L784.0,600.0 L805.6,460.0 Z" fill="none" stroke="#8f8f8f" stroke-width="3"/><path d="M737,900 Q735,920 746,936 L861,1035 Q876,1034 881,1013" fill="none" stroke="#9a9a9a" stroke-width="12"/><path d="M741,905 Q740,922 750,933 L862,1029 Q872,1028 877,1012" fill="none" stroke="#e8e8e8" stroke-width="2"/></g>
<path d="M837.5,207.0 Q842.0,180.0 871.0,172.3 L909.0,172.3 L972.0,236.4 Q986.0,252.0 987.5,283.0 L974.0,380.0 L936.3,620.0 L902.0,860.0 L881.5,1013.0 Q878.0,1034.0 861.0,1035.0 L746.0,936.0 Q733.0,918.0 735.5,895.0 L737.0,860.0 L783.0,600.0 L804.6,460.0 Z" fill="none" stroke="#00ffff" stroke-width="1.6" opacity="1"/>
<path d="M840.5,207.0 Q845.0,183.0 872.5,175.3 L908.1,175.3 L969.0,238.2 Q983.0,252.0 984.5,283.0 L971.0,380.0 L933.3,620.0 L899.0,860.0 L878.5,1013.0 Q875.0,1031.0 861.0,1032.0 L749.0,934.5 Q736.0,918.0 738.5,895.0 L740.0,860.0 L786.0,600.0 L807.6,460.0 Z" fill="none" stroke="#00ffff" stroke-width="1" opacity="1"/>
<path d="M843.5,207.0 Q848.0,186.0 874.0,178.3 L907.2,178.3 L966.0,240.0 Q980.0,252.0 981.5,283.0 L968.0,380.0 L930.3,620.0 L896.0,860.0 L875.5,1013.0 Q872.0,1028.0 861.0,1029.0 L752.0,933.0 Q739.0,918.0 741.5,895.0 L743.0,860.0 L789.0,600.0 L810.6,460.0 Z" fill="none" stroke="#00ffff" stroke-width="1" opacity="0.9"/>
<path d="M847.5,207.0 Q852.0,190.0 876.0,182.3 L906.0,182.3 L962.0,242.4 Q976.0,252.0 977.5,283.0 L964.0,380.0 L926.3,620.0 L892.0,860.0 L871.5,1013.0 Q868.0,1024.0 861.0,1025.0 L756.0,931.0 Q743.0,918.0 745.5,895.0 L747.0,860.0 L793.0,600.0 L814.6,460.0 Z" fill="none" stroke="#00ffff" stroke-width="1" opacity="0.9"/>
<path d="M851.5,207.0 Q856.0,194.0 878.0,186.3 L904.8,186.3 L958.0,244.8 Q972.0,252.0 973.5,283.0 L960.0,380.0 L922.3,620.0 L888.0,860.0 L867.5,1013.0 Q864.0,1020.0 861.0,1021.0 L760.0,929.0 Q747.0,918.0 749.5,895.0 L751.0,860.0 L797.0,600.0 L818.6,460.0 Z" fill="none" stroke="#00ffff" stroke-width="1" opacity="0.8"/>
<path d="M856.5,207.0 Q861.0,199.0 880.5,191.3 L903.3,191.3 L953.0,247.8 Q967.0,252.0 968.5,283.0 L955.0,380.0 L917.3,620.0 L883.0,860.0 L862.5,1013.0 Q859.0,1015.0 861.0,1016.0 L765.0,926.5 Q752.0,918.0 754.5,895.0 L756.0,860.0 L802.0,600.0 L823.6,460.0 Z" fill="none" stroke="#00ffff" stroke-width="1" opacity="0.8"/>
<g clip-path="url(#cvclip)">
<polyline points="839.6,235.0 793.7,567.5 734.6,900.0" fill="none" stroke="#00ffff" stroke-width="1" opacity=".85"/>
<polyline points="843.6,235.0 797.7,567.5 738.6,900.0" fill="none" stroke="#00ffff" stroke-width="1" opacity=".85"/>
<polyline points="848.6,235.0 802.7,567.5 743.6,900.0" fill="none" stroke="#00ffff" stroke-width="1" opacity=".85"/>
<polyline points="853.6,235.0 807.7,567.5 748.6,900.0" fill="none" stroke="#00ffff" stroke-width="1" opacity=".85"/>
<polyline points="838.6,392.0 799.9,646.0 753.6,900.0" fill="none" stroke="#00ffff" stroke-width="1" opacity=".85"/>
<polyline points="842.6,392.0 803.9,646.0 757.6,900.0" fill="none" stroke="#00ffff" stroke-width="1" opacity=".85"/>
<polyline points="847.6,392.0 808.9,646.0 762.6,900.0" fill="none" stroke="#00ffff" stroke-width="1" opacity=".85"/>
<polyline points="852.6,392.0 813.9,646.0 767.6,900.0" fill="none" stroke="#00ffff" stroke-width="1" opacity=".85"/>
<polyline points="861.6,392.0 822.9,646.0 776.6,900.0" fill="none" stroke="#00ffff" stroke-width="1" opacity=".85"/>
<polyline points="865.6,392.0 826.9,646.0 780.6,900.0" fill="none" stroke="#00ffff" stroke-width="1" opacity=".85"/>
<polyline points="870.6,392.0 831.9,646.0 785.6,900.0" fill="none" stroke="#00ffff" stroke-width="1" opacity=".85"/>
<polyline points="909.9,390.0 862.6,695.0 804.2,1000.0" fill="none" stroke="#00ffff" stroke-width="1" opacity=".85"/>
<polyline points="913.9,390.0 866.6,695.0 808.2,1000.0" fill="none" stroke="#00ffff" stroke-width="1" opacity=".85"/>
<polyline points="918.9,390.0 871.6,695.0 813.2,1000.0" fill="none" stroke="#00ffff" stroke-width="1" opacity=".85"/>
<polyline points="922.9,390.0 875.6,695.0 817.2,1000.0" fill="none" stroke="#00ffff" stroke-width="1" opacity=".85"/>
<polyline points="927.9,390.0 880.6,695.0 822.2,1000.0" fill="none" stroke="#00ffff" stroke-width="1" opacity=".85"/>
<polyline points="931.9,390.0 884.6,695.0 826.2,1000.0" fill="none" stroke="#00ffff" stroke-width="1" opacity=".85"/>
<polyline points="935.9,390.0 888.6,695.0 830.2,1000.0" fill="none" stroke="#00ffff" stroke-width="1" opacity=".85"/>
<polyline points="939.9,390.0 892.6,695.0 834.2,1000.0" fill="none" stroke="#00ffff" stroke-width="1" opacity=".85"/>
<polyline points="980.9,290.0 929.1,645.0 862.2,1000.0" fill="none" stroke="#00ffff" stroke-width="1" opacity=".85"/>
<polyline points="984.9,290.0 933.1,645.0 866.2,1000.0" fill="none" stroke="#00ffff" stroke-width="1" opacity=".85"/>
<polyline points="987.9,290.0 936.1,645.0 869.2,1000.0" fill="none" stroke="#00ffff" stroke-width="1" opacity=".85"/>
</g><g clip-path="url(#cvclip)">
<polyline points="915.5,296.2 912.4,400.0" fill="none" stroke="#00ffff" stroke-width="1" opacity=".85"/>
<polyline points="919.8,295.0 918.9,400.0" fill="none" stroke="#00ffff" stroke-width="1" opacity=".85"/>
<polyline points="924.0,293.8 925.4,400.0" fill="none" stroke="#00ffff" stroke-width="1" opacity=".85"/>
<polyline points="928.3,292.5 931.9,400.0" fill="none" stroke="#00ffff" stroke-width="1" opacity=".85"/>
<polyline points="868.0,415.0 874.0,414.0 893.0,436.0 880.5,534.0 853.0,506.0 868.0,415.0" fill="none" stroke="#00ffff" stroke-width="1" />
<polyline points="863.0,405.0 878.0,403.0 899.0,428.0 885.0,545.0 846.0,510.0 863.0,405.0" fill="none" stroke="#00ffff" stroke-width="1" />
<polyline points="860.0,438.0 871.0,438.0 873.0,440.0 871.0,442.0 860.0,442.0" fill="none" stroke="#00ffff" stroke-width="1" />
<polygon points="862.0,438.5 871.0,438.5 872.0,440.0 871.0,441.5 862.0,441.5" fill="#d6eef0" />
<polyline points="856.0,468.0 867.0,468.0 869.0,470.0 867.0,472.0 856.0,472.0" fill="none" stroke="#00ffff" stroke-width="1" />
<polygon points="858.0,468.5 867.0,468.5 868.0,470.0 867.0,471.5 858.0,471.5" fill="#d6eef0" />
<polyline points="806.0,450.0 840.0,450.0 846.0,456.0" fill="none" stroke="#00ffff" stroke-width="1" />
<polyline points="806.0,455.0 840.0,455.0" fill="none" stroke="#00ffff" stroke-width="1" />
<polyline points="922.0,440.0 960.0,440.0" fill="none" stroke="#00ffff" stroke-width="1" />
<polyline points="922.0,444.0 960.0,444.0" fill="none" stroke="#00ffff" stroke-width="1" />
<polyline points="898.0,455.0 926.0,455.0 926.0,462.0 898.0,462.0" fill="none" stroke="#00ffff" stroke-width="1" />
<polyline points="847.4,551.5 853.4,550.5 872.4,572.5 859.9,670.5 832.4,642.5 847.4,551.5" fill="none" stroke="#00ffff" stroke-width="1" />
<polyline points="842.4,541.5 857.4,539.5 878.4,564.5 864.4,681.5 825.4,646.5 842.4,541.5" fill="none" stroke="#00ffff" stroke-width="1" />
<polyline points="839.4,574.5 850.4,574.5 852.4,576.5 850.4,578.5 839.4,578.5" fill="none" stroke="#00ffff" stroke-width="1" />
<polygon points="841.4,575.0 850.4,575.0 851.4,576.5 850.4,578.0 841.4,578.0" fill="#d6eef0" />
<polyline points="835.4,604.5 846.4,604.5 848.4,606.5 846.4,608.5 835.4,608.5" fill="none" stroke="#00ffff" stroke-width="1" />
<polygon points="837.4,605.0 846.4,605.0 847.4,606.5 846.4,608.0 837.4,608.0" fill="#d6eef0" />
<polyline points="785.4,586.5 819.4,586.5 825.4,592.5" fill="none" stroke="#00ffff" stroke-width="1" />
<polyline points="785.4,591.5 819.4,591.5" fill="none" stroke="#00ffff" stroke-width="1" />
<polyline points="901.4,576.5 939.4,576.5" fill="none" stroke="#00ffff" stroke-width="1" />
<polyline points="901.4,580.5 939.4,580.5" fill="none" stroke="#00ffff" stroke-width="1" />
<polyline points="877.4,591.5 905.4,591.5 905.4,598.5 877.4,598.5" fill="none" stroke="#00ffff" stroke-width="1" />
<polyline points="826.8,688.0 832.8,687.0 851.8,709.0 839.3,807.0 811.8,779.0 826.8,688.0" fill="none" stroke="#00ffff" stroke-width="1" />
<polyline points="821.8,678.0 836.8,676.0 857.8,701.0 843.8,818.0 804.8,783.0 821.8,678.0" fill="none" stroke="#00ffff" stroke-width="1" />
<polyline points="818.8,711.0 829.8,711.0 831.8,713.0 829.8,715.0 818.8,715.0" fill="none" stroke="#00ffff" stroke-width="1" />
<polygon points="820.8,711.5 829.8,711.5 830.8,713.0 829.8,714.5 820.8,714.5" fill="#d6eef0" />
<polyline points="814.8,741.0 825.8,741.0 827.8,743.0 825.8,745.0 814.8,745.0" fill="none" stroke="#00ffff" stroke-width="1" />
<polygon points="816.8,741.5 825.8,741.5 826.8,743.0 825.8,744.5 816.8,744.5" fill="#d6eef0" />
<polyline points="764.8,723.0 798.8,723.0 804.8,729.0" fill="none" stroke="#00ffff" stroke-width="1" />
<polyline points="764.8,728.0 798.8,728.0" fill="none" stroke="#00ffff" stroke-width="1" />
<polyline points="880.8,713.0 918.8,713.0" fill="none" stroke="#00ffff" stroke-width="1" />
<polyline points="880.8,717.0 918.8,717.0" fill="none" stroke="#00ffff" stroke-width="1" />
<polyline points="856.8,728.0 884.8,728.0 884.8,735.0 856.8,735.0" fill="none" stroke="#00ffff" stroke-width="1" />
<polyline points="806.2,824.5 812.2,823.5 831.2,845.5 818.7,943.5 791.2,915.5 806.2,824.5" fill="none" stroke="#00ffff" stroke-width="1" />
<polyline points="801.2,814.5 816.2,812.5 837.2,837.5 823.2,954.5 784.2,919.5 801.2,814.5" fill="none" stroke="#00ffff" stroke-width="1" />
<polyline points="798.2,847.5 809.2,847.5 811.2,849.5 809.2,851.5 798.2,851.5" fill="none" stroke="#00ffff" stroke-width="1" />
<polygon points="800.2,848.0 809.2,848.0 810.2,849.5 809.2,851.0 800.2,851.0" fill="#d6eef0" />
<polyline points="794.2,877.5 805.2,877.5 807.2,879.5 805.2,881.5 794.2,881.5" fill="none" stroke="#00ffff" stroke-width="1" />
<polygon points="796.2,878.0 805.2,878.0 806.2,879.5 805.2,881.0 796.2,881.0" fill="#d6eef0" />
<polyline points="744.2,859.5 778.2,859.5 784.2,865.5" fill="none" stroke="#00ffff" stroke-width="1" />
<polyline points="744.2,864.5 778.2,864.5" fill="none" stroke="#00ffff" stroke-width="1" />
<polyline points="860.2,849.5 898.2,849.5" fill="none" stroke="#00ffff" stroke-width="1" />
<polyline points="860.2,853.5 898.2,853.5" fill="none" stroke="#00ffff" stroke-width="1" />
<polyline points="836.2,864.5 864.2,864.5 864.2,871.5 836.2,871.5" fill="none" stroke="#00ffff" stroke-width="1" />
</g>
<ellipse cx="872" cy="333" rx="17" ry="28" fill="none" stroke="#00ffff" transform="rotate(-8 872 333)"/>
<ellipse cx="874" cy="334" rx="13" ry="25" fill="none" stroke="#00ffff" transform="rotate(-8 874 334)"/>
<ellipse cx="879" cy="334" rx="13" ry="25" fill="none" stroke="#00ffff" transform="rotate(-8 879 334)"/>
<polyline points="849.0,220.0 905.0,264.0 952.0,296.0" fill="none" stroke="#00ffff" stroke-width="1" />
<polyline points="853.0,214.0 909.0,258.0 955.0,290.0" fill="none" stroke="#00ffff" stroke-width="1" />
<polyline points="872.0,178.0 872.0,240.0 866.0,320.0" fill="none" stroke="#00ffff" stroke-width="1" />
<polyline points="886.0,176.0 882.0,250.0 868.0,330.0" fill="none" stroke="#00ffff" stroke-width="1" />
<rect x="868" y="203" width="28" height="12" rx="5" fill="none" stroke="#00ffff"/>
<rect x="870" y="205" width="24" height="8" rx="3" fill="none" stroke="#00ffff"/>
<rect x="895" y="238" width="42" height="10" rx="5" fill="none" stroke="#00ffff"/>
<rect x="897" y="240" width="38" height="6" rx="3" fill="none" stroke="#00ffff"/>
<rect x="876" y="288" width="40" height="13" rx="5" fill="none" stroke="#00ffff"/>
<rect x="878" y="290" width="36" height="9" rx="3" fill="none" stroke="#00ffff"/>
<rect x="866" y="367" width="40" height="13" rx="5" fill="none" stroke="#00ffff"/>
<rect x="868" y="369" width="36" height="9" rx="3" fill="none" stroke="#00ffff"/>
<rect x="873" y="260" width="14" height="14" rx="4" fill="none" stroke="#00ffff"/>
<path d="M919,198 Q925,206 940,207 L950,204 L951,210 Q938,216 922,208 Z" fill="#dcdcdc" stroke="#00ffff"/>
<path d="M928,188 h8 v10 h-8 z" fill="none" stroke="#00ffff"/>
<path d="M925,262 Q950,262 975,290" fill="none" stroke="#00ffff"/>
<path d="M930,260 Q953,257 976,288" fill="none" stroke="#00ffff"/>
<path d="M935,258 Q956,252 977,287" fill="none" stroke="#00ffff"/>
<path d="M941,255 Q959,246 978,285" fill="none" stroke="#00ffff"/>
<rect x="864" y="691" width="50" height="20" rx="8" fill="none" stroke="#00ffff"/>
<ellipse cx="908.0" cy="701.0" rx="3.0" ry="7.0" fill="none" stroke="#00ffff"/>
<rect x="821" y="979" width="50" height="20" rx="8" fill="none" stroke="#00ffff"/>
<ellipse cx="865.0" cy="989.0" rx="3.0" ry="7.0" fill="none" stroke="#00ffff"/>
<rect x="926" y="283" width="52" height="16" rx="6" fill="none" stroke="#00ffff"/>
<path d="M1070.0,263.0 C1069.3,266.3 1067.7,276.8 1066.0,283.0 C1064.3,289.2 1061.0,297.2 1060.0,300.0" fill="none" stroke="#10b8c8" stroke-width="2" stroke-linecap="round"/>
<path d="M1052.0,385.0 C1051.0,392.5 1048.7,414.2 1046.0,430.0 C1043.3,445.8 1038.7,466.2 1036.0,480.0 C1033.3,493.8 1032.3,499.7 1030.0,513.0 C1027.7,526.3 1025.0,542.2 1022.0,560.0 C1019.0,577.8 1015.2,600.0 1012.0,620.0 C1008.8,640.0 1005.7,660.0 1003.0,680.0 C1000.3,700.0 998.5,720.0 996.0,740.0 C993.5,760.0 990.0,785.0 988.0,800.0 C986.0,815.0 984.7,825.0 984.0,830.0" fill="none" stroke="#10b8c8" stroke-width="2" stroke-linecap="round"/>
<path d="M1072.0,259.0 C1072.5,263.3 1072.7,277.3 1075.0,285.0 C1077.3,292.7 1082.8,298.3 1086.0,305.0 C1089.2,311.7 1092.3,318.3 1094.0,325.0 C1095.7,331.7 1095.7,341.7 1096.0,345.0" fill="none" stroke="#10d878" stroke-width="2.5" stroke-linecap="round"/>
<path d="M1093.0,366.0 C1092.7,368.3 1093.0,370.2 1091.0,380.0 C1089.0,389.8 1084.5,407.7 1081.0,425.0 C1077.5,442.3 1073.9,460.8 1070.0,484.0 C1066.1,507.2 1061.0,541.8 1057.5,564.0 C1054.0,586.2 1052.2,594.3 1049.0,617.0 C1045.8,639.7 1042.3,673.5 1038.5,700.0 C1034.7,726.5 1029.8,752.2 1026.0,776.0 C1022.2,799.8 1017.8,828.7 1015.5,843.0 C1013.2,857.3 1012.6,858.8 1012.0,862.0" fill="none" stroke="#10d878" stroke-width="2.5" stroke-linecap="round"/>
<path d="M1080.5,261.0 C1081.1,264.5 1081.4,274.3 1084.0,282.0 C1086.6,289.7 1092.7,299.8 1096.0,307.0 C1099.3,314.2 1102.3,318.7 1104.0,325.0 C1105.7,331.3 1105.7,341.7 1106.0,345.0" fill="none" stroke="#a00414" stroke-width="2.5" stroke-linecap="round"/>
<path d="M1062.0,371.0 C1065.8,371.3 1079.2,372.3 1085.0,373.0 C1090.8,373.7 1094.3,372.5 1097.0,375.0 C1099.7,377.5 1101.3,379.7 1101.0,388.0 C1100.7,396.3 1097.7,413.2 1095.0,425.0 C1092.3,436.8 1087.8,447.0 1085.0,459.0 C1082.2,471.0 1080.2,483.0 1078.0,497.0 C1075.8,511.0 1073.7,525.7 1072.0,543.0 C1070.3,560.3 1069.8,587.3 1068.0,601.0 C1066.2,614.7 1063.7,613.3 1061.5,625.0 C1059.3,636.7 1057.8,652.2 1055.0,671.0 C1052.2,689.8 1048.5,716.3 1045.0,738.0 C1041.5,759.7 1037.2,780.7 1034.0,801.0 C1030.8,821.3 1029.2,845.2 1026.0,860.0 C1022.8,874.8 1018.8,883.0 1015.0,890.0 C1011.2,897.0 1005.0,900.0 1003.0,902.0" fill="none" stroke="#a00414" stroke-width="2.5" stroke-linecap="round"/>
<path d="M1062.0,389.0 L1057.0,408.0" fill="none" stroke="#a00414" stroke-width="2.4" stroke-linecap="round"/>
<path d="M1041.0,513.0 C1040.2,518.0 1038.2,528.5 1036.0,543.0 C1033.8,557.5 1030.4,582.2 1028.0,600.0 C1025.6,617.8 1023.7,636.0 1021.5,650.0 C1019.3,664.0 1017.6,668.2 1015.0,684.0 C1012.4,699.8 1008.8,725.7 1006.0,745.0 C1003.2,764.3 1000.0,786.3 998.0,800.0 C996.0,813.7 994.7,822.5 994.0,827.0" fill="none" stroke="#a00414" stroke-width="2.4" stroke-linecap="round"/>
<path d="M1095.0,513.0 C1094.0,521.5 1091.4,549.3 1089.0,564.0 C1086.6,578.7 1082.3,591.7 1080.5,601.0 C1078.7,610.3 1080.1,606.2 1078.0,620.0 C1075.9,633.8 1071.3,666.3 1068.0,684.0 C1064.7,701.7 1060.2,711.7 1058.0,726.0 C1055.8,740.3 1055.5,756.8 1055.0,770.0 C1054.5,783.2 1056.5,792.3 1055.0,805.0 C1053.5,817.7 1049.3,831.2 1046.0,846.0 C1042.7,860.8 1037.4,880.8 1035.0,894.0 C1032.6,907.2 1033.2,916.3 1031.5,925.0 C1029.8,933.7 1027.6,941.8 1025.0,946.0 C1022.4,950.2 1019.3,950.3 1016.0,950.0 C1012.7,949.7 1008.7,947.0 1005.0,944.0 C1001.3,941.0 995.8,934.0 994.0,932.0" fill="none" stroke="#10b8c8" stroke-width="2" stroke-linecap="round"/>
<polygon points="995.0,386.0 1010.0,388.0 1022.0,385.0 1038.0,385.0 1040.0,394.0 1058.0,400.0 1060.0,408.0 1052.0,412.0 1054.0,420.0 1030.0,418.0 1012.0,412.0 1000.0,412.0 996.0,405.0 1003.0,400.0 994.0,398.0" fill="#9c7752" />
<polygon points="1022.0,392.0 1040.0,394.0 1058.0,400.0 1054.0,420.0 1030.0,414.0" fill="#b88e64" />
<polygon points="996.0,405.0 1003.0,400.0 1030.0,410.0 1030.0,418.0 1012.0,412.0 1000.0,412.0" fill="#7a5838" />
<rect x="1008.0" y="391.0" width="19" height="12" rx="5" fill="url(#gClip)"/>
<polygon points="1017.0,421.0 1035.0,419.0 1062.0,420.0 1064.0,428.0 1090.0,432.0 1094.0,436.0 1070.0,440.0 1050.0,446.0 1024.0,440.0 1016.0,436.0" fill="#9c7752" />
<rect x="1025.0" y="425.0" width="22" height="13" rx="6" fill="url(#gClip)"/>
<polygon points="1056.0,428.0 1092.0,434.0 1085.0,437.0 1094.0,480.0 1090.0,484.0 1076.0,482.0 1070.0,470.0 1050.0,474.0 1040.0,460.0 1046.0,448.0 1068.0,446.0" fill="#b88e64" />
<polygon points="1056.0,428.0 1068.0,446.0 1046.0,448.0 1040.0,452.0" fill="#7a5838" />
<polygon points="1070.0,446.0 1085.0,440.0 1094.0,480.0 1090.0,484.0 1076.0,482.0" fill="#dcb084" />
<polygon points="1076.0,480.0 1092.0,478.0 1093.0,484.0 1077.0,486.0" fill="#7a5838" />
<polygon points="986.0,452.0 996.0,448.0 1016.0,444.0 1024.0,438.0 1040.0,446.0 1046.0,460.0 1060.0,470.0 1064.0,478.0 1040.0,482.0 1020.0,476.0 1000.0,474.0 992.0,470.0 985.0,462.0" fill="#9c7752" />
<polygon points="996.0,448.0 1016.0,444.0 1040.0,456.0 1050.0,470.0 1030.0,468.0 1010.0,456.0" fill="#7a5838" />
<rect x="999.0" y="460.0" width="18" height="11" rx="5" fill="url(#gClip)"/>
<polygon points="1020.0,466.0 1060.0,470.0 1064.0,478.0 1040.0,482.0 1022.0,478.0" fill="#b88e64" />
<polygon points="1008.0,484.0 1030.0,482.0 1062.0,480.0 1064.0,492.0 1060.0,500.0 1040.0,504.0 1016.0,504.0 1007.0,498.0" fill="#9c7752" />
<polygon points="1034.0,484.0 1062.0,480.0 1064.0,492.0 1060.0,500.0 1040.0,498.0" fill="#b88e64" />
<rect x="1016.0" y="489.0" width="22" height="13" rx="6" fill="url(#gClip)"/>
<rect x="1073.0" y="497.0" width="18" height="11" rx="3" fill="url(#gClip)"/>
<polygon points="1030.0,502.0 1050.0,506.0 1070.0,500.0 1076.0,508.0 1098.0,510.0 1096.0,513.0 1072.0,516.0 1060.0,520.0 1044.0,518.0" fill="#3a2414" />
<polygon points="1044.0,510.0 1072.0,507.0 1098.0,510.0 1072.0,512.0 1050.0,516.0" fill="#dcb084" />
<polyline points="1008.0,476.0 1016.0,486.0" fill="none" stroke="#2a1a0e" stroke-width="1.2" />
<polygon points="974.0,523.5 989.0,525.5 1001.0,522.5 1017.0,522.5 1019.0,531.5 1037.0,537.5 1039.0,545.5 1031.0,549.5 1033.0,557.5 1009.0,555.5 991.0,549.5 979.0,549.5 975.0,542.5 982.0,537.5 973.0,535.5" fill="#9c7752" />
<polygon points="1001.0,529.5 1019.0,531.5 1037.0,537.5 1033.0,557.5 1009.0,551.5" fill="#b88e64" />
<polygon points="975.0,542.5 982.0,537.5 1009.0,547.5 1009.0,555.5 991.0,549.5 979.0,549.5" fill="#7a5838" />
<rect x="987.0" y="528.5" width="19" height="12" rx="5" fill="url(#gClip)"/>
<polygon points="996.0,558.5 1014.0,556.5 1041.0,557.5 1043.0,565.5 1069.0,569.5 1073.0,573.5 1049.0,577.5 1029.0,583.5 1003.0,577.5 995.0,573.5" fill="#9c7752" />
<rect x="1004.0" y="562.5" width="22" height="13" rx="6" fill="url(#gClip)"/>
<polygon points="1035.0,565.5 1071.0,571.5 1064.0,574.5 1073.0,617.5 1069.0,621.5 1055.0,619.5 1049.0,607.5 1029.0,611.5 1019.0,597.5 1025.0,585.5 1047.0,583.5" fill="#b88e64" />
<polygon points="1035.0,565.5 1047.0,583.5 1025.0,585.5 1019.0,589.5" fill="#7a5838" />
<polygon points="1049.0,583.5 1064.0,577.5 1073.0,617.5 1069.0,621.5 1055.0,619.5" fill="#dcb084" />
<polygon points="1055.0,617.5 1071.0,615.5 1072.0,621.5 1056.0,623.5" fill="#7a5838" />
<polygon points="965.0,589.5 975.0,585.5 995.0,581.5 1003.0,575.5 1019.0,583.5 1025.0,597.5 1039.0,607.5 1043.0,615.5 1019.0,619.5 999.0,613.5 979.0,611.5 971.0,607.5 964.0,599.5" fill="#9c7752" />
<polygon points="975.0,585.5 995.0,581.5 1019.0,593.5 1029.0,607.5 1009.0,605.5 989.0,593.5" fill="#7a5838" />
<rect x="978.0" y="597.5" width="18" height="11" rx="5" fill="url(#gClip)"/>
<polygon points="999.0,603.5 1039.0,607.5 1043.0,615.5 1019.0,619.5 1001.0,615.5" fill="#b88e64" />
<polygon points="987.0,621.5 1009.0,619.5 1041.0,617.5 1043.0,629.5 1039.0,637.5 1019.0,641.5 995.0,641.5 986.0,635.5" fill="#9c7752" />
<polygon points="1013.0,621.5 1041.0,617.5 1043.0,629.5 1039.0,637.5 1019.0,635.5" fill="#b88e64" />
<rect x="995.0" y="626.5" width="22" height="13" rx="6" fill="url(#gClip)"/>
<rect x="1052.0" y="634.5" width="18" height="11" rx="3" fill="url(#gClip)"/>
<polygon points="1009.0,639.5 1029.0,643.5 1049.0,637.5 1055.0,645.5 1077.0,647.5 1075.0,650.5 1051.0,653.5 1039.0,657.5 1023.0,655.5" fill="#3a2414" />
<polygon points="1023.0,647.5 1051.0,644.5 1077.0,647.5 1051.0,649.5 1029.0,653.5" fill="#dcb084" />
<polyline points="987.0,613.5 995.0,623.5" fill="none" stroke="#2a1a0e" stroke-width="1.2" />
<polygon points="953.0,661.0 968.0,663.0 980.0,660.0 996.0,660.0 998.0,669.0 1016.0,675.0 1018.0,683.0 1010.0,687.0 1012.0,695.0 988.0,693.0 970.0,687.0 958.0,687.0 954.0,680.0 961.0,675.0 952.0,673.0" fill="#9c7752" />
<polygon points="980.0,667.0 998.0,669.0 1016.0,675.0 1012.0,695.0 988.0,689.0" fill="#b88e64" />
<polygon points="954.0,680.0 961.0,675.0 988.0,685.0 988.0,693.0 970.0,687.0 958.0,687.0" fill="#7a5838" />
<rect x="966.0" y="666.0" width="19" height="12" rx="5" fill="url(#gClip)"/>
<polygon points="975.0,696.0 993.0,694.0 1020.0,695.0 1022.0,703.0 1048.0,707.0 1052.0,711.0 1028.0,715.0 1008.0,721.0 982.0,715.0 974.0,711.0" fill="#9c7752" />
<rect x="983.0" y="700.0" width="22" height="13" rx="6" fill="url(#gClip)"/>
<polygon points="1014.0,703.0 1050.0,709.0 1043.0,712.0 1052.0,755.0 1048.0,759.0 1034.0,757.0 1028.0,745.0 1008.0,749.0 998.0,735.0 1004.0,723.0 1026.0,721.0" fill="#b88e64" />
<polygon points="1014.0,703.0 1026.0,721.0 1004.0,723.0 998.0,727.0" fill="#7a5838" />
<polygon points="1028.0,721.0 1043.0,715.0 1052.0,755.0 1048.0,759.0 1034.0,757.0" fill="#dcb084" />
<polygon points="1034.0,755.0 1050.0,753.0 1051.0,759.0 1035.0,761.0" fill="#7a5838" />
<polygon points="944.0,727.0 954.0,723.0 974.0,719.0 982.0,713.0 998.0,721.0 1004.0,735.0 1018.0,745.0 1022.0,753.0 998.0,757.0 978.0,751.0 958.0,749.0 950.0,745.0 943.0,737.0" fill="#9c7752" />
<polygon points="954.0,723.0 974.0,719.0 998.0,731.0 1008.0,745.0 988.0,743.0 968.0,731.0" fill="#7a5838" />
<rect x="957.0" y="735.0" width="18" height="11" rx="5" fill="url(#gClip)"/>
<polygon points="978.0,741.0 1018.0,745.0 1022.0,753.0 998.0,757.0 980.0,753.0" fill="#b88e64" />
<polygon points="966.0,759.0 988.0,757.0 1020.0,755.0 1022.0,767.0 1018.0,775.0 998.0,779.0 974.0,779.0 965.0,773.0" fill="#9c7752" />
<polygon points="992.0,759.0 1020.0,755.0 1022.0,767.0 1018.0,775.0 998.0,773.0" fill="#b88e64" />
<rect x="974.0" y="764.0" width="22" height="13" rx="6" fill="url(#gClip)"/>
<rect x="1031.0" y="772.0" width="18" height="11" rx="3" fill="url(#gClip)"/>
<polygon points="988.0,777.0 1008.0,781.0 1028.0,775.0 1034.0,783.0 1056.0,785.0 1054.0,788.0 1030.0,791.0 1018.0,795.0 1002.0,793.0" fill="#3a2414" />
<polygon points="1002.0,785.0 1030.0,782.0 1056.0,785.0 1030.0,787.0 1008.0,791.0" fill="#dcb084" />
<polyline points="966.0,751.0 974.0,761.0" fill="none" stroke="#2a1a0e" stroke-width="1.2" />
<polygon points="932.0,798.5 947.0,800.5 959.0,797.5 975.0,797.5 977.0,806.5 995.0,812.5 997.0,820.5 989.0,824.5 991.0,832.5 967.0,830.5 949.0,824.5 937.0,824.5 933.0,817.5 940.0,812.5 931.0,810.5" fill="#9c7752" />
<polygon points="959.0,804.5 977.0,806.5 995.0,812.5 991.0,832.5 967.0,826.5" fill="#b88e64" />
<polygon points="933.0,817.5 940.0,812.5 967.0,822.5 967.0,830.5 949.0,824.5 937.0,824.5" fill="#7a5838" />
<rect x="945.0" y="803.5" width="19" height="12" rx="5" fill="url(#gClip)"/>
<polygon points="954.0,833.5 972.0,831.5 999.0,832.5 1001.0,840.5 1027.0,844.5 1031.0,848.5 1007.0,852.5 987.0,858.5 961.0,852.5 953.0,848.5" fill="#9c7752" />
<rect x="962.0" y="837.5" width="22" height="13" rx="6" fill="url(#gClip)"/>
<polygon points="993.0,840.5 1029.0,846.5 1022.0,849.5 1031.0,892.5 1027.0,896.5 1013.0,894.5 1007.0,882.5 987.0,886.5 977.0,872.5 983.0,860.5 1005.0,858.5" fill="#b88e64" />
<polygon points="993.0,840.5 1005.0,858.5 983.0,860.5 977.0,864.5" fill="#7a5838" />
<polygon points="1007.0,858.5 1022.0,852.5 1031.0,892.5 1027.0,896.5 1013.0,894.5" fill="#dcb084" />
<polygon points="1013.0,892.5 1029.0,890.5 1030.0,896.5 1014.0,898.5" fill="#7a5838" />
<polygon points="923.0,864.5 933.0,860.5 953.0,856.5 961.0,850.5 977.0,858.5 983.0,872.5 997.0,882.5 1001.0,890.5 977.0,894.5 957.0,888.5 937.0,886.5 929.0,882.5 922.0,874.5" fill="#9c7752" />
<polygon points="933.0,860.5 953.0,856.5 977.0,868.5 987.0,882.5 967.0,880.5 947.0,868.5" fill="#7a5838" />
<rect x="936.0" y="872.5" width="18" height="11" rx="5" fill="url(#gClip)"/>
<polygon points="957.0,878.5 997.0,882.5 1001.0,890.5 977.0,894.5 959.0,890.5" fill="#b88e64" />
<polygon points="945.0,896.5 967.0,894.5 999.0,892.5 1001.0,904.5 997.0,912.5 977.0,916.5 953.0,916.5 944.0,910.5" fill="#9c7752" />
<polygon points="971.0,896.5 999.0,892.5 1001.0,904.5 997.0,912.5 977.0,910.5" fill="#b88e64" />
<rect x="953.0" y="901.5" width="22" height="13" rx="6" fill="url(#gClip)"/>
<rect x="1010.0" y="909.5" width="18" height="11" rx="3" fill="url(#gClip)"/>
<polygon points="967.0,914.5 987.0,918.5 1007.0,912.5 1013.0,920.5 1035.0,922.5 1033.0,925.5 1009.0,928.5 997.0,932.5 981.0,930.5" fill="#3a2414" />
<polygon points="981.0,922.5 1009.0,919.5 1035.0,922.5 1009.0,924.5 987.0,928.5" fill="#dcb084" />
<polyline points="945.0,888.5 953.0,898.5" fill="none" stroke="#2a1a0e" stroke-width="1.2" />
<path d="M1093.0,366.0 C1092.7,368.3 1092.5,372.7 1091.0,380.0 C1089.5,387.3 1085.2,405.0 1084.0,410.0" fill="none" stroke="#10d878" stroke-width="2.5" stroke-linecap="round"/>
<path d="M1062.0,371.0 C1065.8,371.3 1079.2,372.3 1085.0,373.0 C1090.8,373.7 1094.3,372.5 1097.0,375.0 C1099.7,377.5 1101.2,380.5 1101.0,388.0 C1100.8,395.5 1096.8,414.7 1096.0,420.0" fill="none" stroke="#a00414" stroke-width="2.5" stroke-linecap="round"/>
<rect x="1040.5" y="293" width="35" height="15" rx="6" fill="url(#gCop)"/>
<rect x="1029" y="366.5" width="35" height="15" rx="6" fill="url(#gCop)"/>
<ellipse cx="1073.0" cy="300.0" rx="3.5" ry="7.5" fill="#e8b496" />
<path d="M1056,292 Q1060,288 1068,290 L1070,330 L1060,380 Q1054,384 1046,380 L1043,362 L1052,320 Z" fill="#a0a6aa"/>
<polygon points="1040.0,318.0 1048.0,312.0 1056.0,316.0 1052.0,360.0 1042.0,356.0" fill="#8a9094" />
<rect x="1035.0" y="318.0" width="24.0" height="34.0" fill="url(#gSil)" />
<polygon points="1058.0,328.0 1072.0,308.0 1082.0,308.0 1084.0,316.0 1094.0,316.0 1106.0,326.0 1106.0,360.0 1100.0,364.0 1076.0,362.0 1062.0,352.0" fill="#a0a6aa" />
<polygon points="1072.0,308.0 1082.0,308.0 1084.0,316.0 1094.0,316.0 1106.0,326.0 1096.0,330.0 1076.0,328.0" fill="#b4babe" />
<polygon points="1058.0,332.0 1076.0,332.0 1078.0,340.0 1074.0,356.0 1060.0,352.0" fill="#8a9094" />
<polygon points="1096.0,330.0 1106.0,326.0 1106.0,360.0 1100.0,364.0 1094.0,362.0" fill="#90969a" />
<polygon points="1082.0,374.0 1088.0,372.0 1090.0,384.0 1084.0,386.0" fill="#8a9094" />
<ellipse cx="1022.0" cy="337.0" rx="17.0" ry="25.0" fill="#f00000" transform="rotate(-8 1022 337)"/>
<polygon points="1004.0,313.0 1024.0,311.0 1030.0,361.0 1010.0,361.0" fill="#f00000" />
<ellipse cx="1007.0" cy="336.0" rx="14.5" ry="25.0" fill="#a40000" transform="rotate(-8 1007 336)"/>
<polygon points="1019.5,264.0 1030.0,263.0 1032.0,276.0 1021.0,277.0" fill="#e80000" />
<rect x="1028.0" y="265.0" width="4.0" height="10.0" fill="#b00000" />
<path d="M1014.0,311.0 C1015.0,308.3 1017.3,300.2 1020.0,295.0 C1022.7,289.8 1027.0,283.8 1030.0,280.0 C1033.0,276.2 1037.0,273.8 1038.0,272.0 C1039.0,270.2 1036.3,269.5 1036.0,269.0" fill="none" stroke="#a00414" stroke-width="2.4" stroke-linecap="round"/>
<path d="M1036.0,267.0 C1037.7,267.2 1043.0,266.5 1046.0,268.0 C1049.0,269.5 1052.0,272.0 1054.0,276.0 C1056.0,280.0 1057.7,284.7 1058.0,292.0 C1058.3,299.3 1057.0,311.2 1056.0,320.0 C1055.0,328.8 1052.3,338.0 1052.0,345.0 C1051.7,352.0 1052.3,357.7 1054.0,362.0 C1055.7,366.3 1060.7,369.5 1062.0,371.0" fill="none" stroke="#a00414" stroke-width="2.4" stroke-linecap="round"/>
<polygon points="1067.0,221.0 1094.0,221.0 1088.0,257.0 1076.0,258.0 1064.0,253.0" fill="url(#gCylH)" />
<path d="M1061,205 Q1061,200 1068,199 L1100,200 Q1104,202 1104,208 L1103,215 Q1090,224 1070,221 Q1061,218 1061,212 Z" fill="#9aa0a4"/>
<path d="M1061,205 Q1075,214 1104,206 L1103,215 Q1090,224 1070,221 Q1061,218 1061,212 Z" fill="#868c90"/>
<polygon points="1068.0,169.0 1110.0,169.0 1105.0,200.0 1066.0,199.0" fill="url(#gCylH)" />
<path d="M1067.0,175 Q1086,184 1109.0,174" fill="none" stroke="#c2c8cc" stroke-width="2"/>
<path d="M1067.0,177 Q1086,186 1109.0,176" fill="none" stroke="#70767a" stroke-width="1.5"/>
<path d="M1066.6,183 Q1086,192 1107.8,182" fill="none" stroke="#c2c8cc" stroke-width="2"/>
<path d="M1066.6,185 Q1086,194 1107.8,184" fill="none" stroke="#70767a" stroke-width="1.5"/>
<path d="M1066.2,191 Q1086,200 1106.6,190" fill="none" stroke="#c2c8cc" stroke-width="2"/>
<path d="M1066.2,193 Q1086,202 1106.6,192" fill="none" stroke="#70767a" stroke-width="1.5"/>
<path d="M1065.8,198 Q1086,207 1105.4,197" fill="none" stroke="#c2c8cc" stroke-width="2"/>
<path d="M1065.8,200 Q1086,209 1105.4,199" fill="none" stroke="#70767a" stroke-width="1.5"/>
<text x="313" y="930" font-size="8" fill="#ece4b0" font-family="Liberation Sans,Noto Sans CJK SC,sans-serif" textLength="74">分解状态：爆炸图出图</text>
</svg>
<!--/MODEL-->
<div id="right" class="abs"></div>
<!--RIGHTBAR-->
<svg class="abs" style="left:1879px;top:168px" width="41" height="872" viewBox="1879 168 41 872"><path d="M1882,173.5 h38 M1882,175.5 h38" stroke="#4f7fb4" stroke-width="1" stroke-dasharray="1,1.5"/><path d="M1882,384.5 h38 M1882,386.5 h38" stroke="#4f7fb4" stroke-width="1" stroke-dasharray="1,1.5"/><path d="M1882,482.5 h38 M1882,484.5 h38" stroke="#4f7fb4" stroke-width="1" stroke-dasharray="1,1.5"/><path d="M1882,692.5 h38 M1882,694.5 h38" stroke="#4f7fb4" stroke-width="1" stroke-dasharray="1,1.5"/><path d="M1882,846.5 h38 M1882,848.5 h38" stroke="#4f7fb4" stroke-width="1" stroke-dasharray="1,1.5"/><g transform="translate(1893,196.5)"><rect x="-8.500" y="-7.500" width="17" height="13" fill="none" stroke="#2050c0" stroke-dasharray="1,1.500"/><path d="M-8,1 q4,-10 8,-3 q3,5 8,1" fill="none" stroke="#1040c0" stroke-width="1.400"/></g><g transform="translate(1893,224.0)"><path d="M-9,6 l4,-12 h13 l-4,12z" fill="none" stroke="#8b4513" stroke-width="1.400"/></g><g transform="translate(1893,253.0)"><path d="M-5,10 l10,-20" stroke="#8b4513" stroke-width="1.500" stroke-dasharray="5,2.500" fill="none"/></g><g transform="translate(1893,279.0)"><path d="M-9,4 q4,-12 9,-5 q4,5 9,-3" fill="none" stroke="#8b4513" stroke-width="1.600"/></g><g transform="translate(1893,308.0)"><path d="M-3,-8l4,4m0,-4l-4,4 M-8,2l4,4m0,-4l-4,4 M3,0l4,4m0,-4l-4,4" stroke="#8b4513" stroke-width="1.300" fill="none"/></g><path d="M1910,305 v6 l3,-3z" fill="#222"/><g transform="translate(1893,337.0)"><path d="M-8,2 h12 M-2,-8 l1,16 M-7,8 l10,-16" stroke="#8b4513" stroke-width="1.300" fill="none"/><text x="-11" y="-4" font-size="6" font-family="Liberation Sans,sans-serif" fill="#555">y</text><text x="-11" y="10" font-size="6" font-family="Liberation Sans,sans-serif" fill="#555">z</text><text x="6" y="1" font-size="6" font-family="Liberation Sans,sans-serif" fill="#555">x</text></g><g transform="translate(1893,366.0)"><rect x="-9" y="2" width="18" height="6" fill="#f0e070" stroke="#886"/><path d="M-2,-8l3,3m0,-3l-3,3 M-5,-2l3,3m0,-3l-3,3 M2,-2l3,3m0,-3l-3,3" stroke="#8b4513" stroke-width="1.100" fill="none"/></g><g transform="translate(1893,406.5)"><rect x="-9.500" y="-7.500" width="12" height="8" fill="#ffffa0" stroke="#886"/><path d="M4,-3 h5 l-6,10 M3,7 l0,-3.500 M3,7 l3,-1" fill="none" stroke="#222" stroke-width="1.100"/></g><g transform="translate(1893,434.0)"><rect x="-9.500" y="-7.500" width="12" height="10" fill="#ffffa0" stroke="#886"/><circle cx="-3.500" cy="-2.500" r="4" fill="#e4e4e4" stroke="#444"/><text x="-6" y="0" font-size="6" font-family="Liberation Sans,sans-serif" fill="#222">A</text><path d="M4,-2 h5 l-6,10 M3,8 l0,-3.500 M3,8 l3,-1" fill="none" stroke="#222" stroke-width="1.100"/></g><g transform="translate(1893,461.0)"><rect x="-9.500" y="-8.500" width="9" height="6" fill="#eef2f6" stroke="#a0a8b0"/><rect x="-4.500" y="-0.500" width="9" height="6" fill="#eef2f6" stroke="#a0a8b0"/><path d="M1,-6 h5 l-3,5 M6,3 h4 l-3,6" fill="none" stroke="#a0a8b0"/></g><g transform="translate(1893,503.0)"><path d="M-9,-1 h6 v4 h12 v6 h-18z" fill="#ffe860" stroke="#a06000"/><rect x="1.500" y="-9.500" width="7" height="6" fill="#70e0e8" stroke="#555"/><path d="M2,-2 l-5,5 M-3,3 v-3 M-3,3 h3" stroke="#222" stroke-width="1.100" fill="none"/></g><g transform="translate(1893,532.5)"><path d="M-9,-1 h6 v4 h12 v6 h-18z" fill="#ffe860" stroke="#a06000"/><circle cx="5" cy="-8" r="1.500" fill="#333"/><path d="M5,-6 v6 M2,-4 h6 M5,0 l-2,4 M5,0 l2,4" stroke="#333" stroke-width="1" fill="none"/><path d="M1,-2 l-4,5 M-3,3 v-3 M-3,3 h3" stroke="#222" stroke-width="1.100" fill="none"/></g><g transform="translate(1893,560.0)"><path d="M-9.500,-8.500 h12 v14 h-12z" fill="#ffe860" stroke="#a06000"/><rect x="-5.500" y="-7.500" width="10" height="9" fill="#70e0e8" stroke="#555"/><path d="M1.500,1.500 h5 l3,3 v6 h-8z" fill="#fff" stroke="#444"/></g><g transform="translate(1893,589.0)"><rect x="-9" y="-8" width="18" height="15" fill="#90ecf0"/><path d="M-4,-8 l3,5 v10 h2 v-10 l3,-5z" fill="#fff" stroke="#555" stroke-width=".9"/></g><g transform="translate(1893,617.0)"><path d="M-8,6 l3,-12 h8 l6,8 v4z M3,-6 l-3,8 h9" fill="#e4eaf0" stroke="#b8c0c8"/></g><g transform="translate(1893,645.0)"><path d="M-8,7 v-6 q2,-8 12,-8 l4,4 v10z" fill="#e4eaf0" stroke="#b8c0c8"/></g><g transform="translate(1893,673.5)"><path d="M-8,7 v-8 l8,-6 l8,6 v8z" fill="#e4eaf0" stroke="#b8c0c8"/></g><g transform="translate(1893,715.0)"><path d="M-8.500,-1.500 h9 v9 h-9z" fill="#70e0e8" stroke="#555"/><path d="M-8.500,-1.500 l7,-7 h9 l-7,7 M7.500,-8.500 v9 l-7,7" fill="none" stroke="#555"/></g><g transform="translate(1893,742.0)"><path d="M0,-10 v20" stroke="#222" stroke-dasharray="3,1.500"/><circle cx="-6" cy="1" r="3" fill="none" stroke="#444"/><path d="M2,-3 q8,0 7,5 q-2,3 -7,-2z" fill="none" stroke="#444"/></g><g transform="translate(1893,771.0)"><path d="M-8,-6 l7,-3 l9,14 l-2,5 l-9,-2z" fill="#90ecf0" stroke="#444"/><path d="M-8,-6 l8,8 l8,3 M0,2 l-5,8" fill="none" stroke="#444"/></g><g transform="translate(1893,798.0)"><path d="M-9,2 q8,-10 18,-10 l-3,8 q-8,0 -12,8z" fill="#90ecf0" stroke="#444"/><path d="M-9,6 q6,-6 14,-6" fill="none" stroke="#444"/></g><g transform="translate(1893,826.5)"><path d="M-8,8 v-12 q8,-5 16,0 v12 q-8,-5 -16,0z" fill="#b8f0f4" stroke="#444" stroke-width="1.200"/></g><g transform="translate(1893,870.0)"><path d="M-9,-8 q7,2 7,16 h-7z M9,-8 q-7,2 -7,16 h7z" fill="#e4eaf0" stroke="#b8c0c8"/><path d="M0,-10 v20" stroke="#b8c0c8"/></g><g transform="translate(1893,896.0)"><circle cx="-3" cy="3" r="6" fill="#e4eaf0" stroke="#b8c0c8"/><rect x="-2.500" y="-8.500" width="11" height="11" fill="#e4eaf0" stroke="#b8c0c8"/></g><g transform="translate(1893,925.0)"><circle cx="-4" cy="4" r="5.500" fill="#dfe6ee" stroke="#ccd4dc"/><path d="M-2.500,-7.500 h11 v11 h-5 v-6 h-6z" fill="#e4eaf0" stroke="#b8c0c8"/></g><g transform="translate(1893,952.5)"><rect x="-8.500" y="-8.500" width="17" height="17" fill="#eef2f6" stroke="#b8c0c8"/><path d="M-5,-5h1M-1,-5h1M3,-5h1M-5,-1h1M-1,-1h1M3,-1h1M-5,3h1M-1,3h1M3,3h1" stroke="#889" stroke-width="1.200"/></g><rect x="1910.500" y="960.500" width="12" height="57" rx="3" fill="#b8c4cc" stroke="#8a98a4"/><path d="M1914,985 h4 M1914,988 h4 M1914,991 h4 M1914,994 h4 M1914,997 h4 M1914,1000 h4 M1914,1003 h4" stroke="#60d0c8" stroke-width="1"/></svg>
<!--/RIGHTBAR-->
<div id="taskbar" class="abs"></div>
<svg class="abs" style="left:0;top:1040px" width="1920" height="8" viewBox="0 1040 1920 8">
<circle cx="26" cy="1060" r="19" fill="#bcd4e8" stroke="#e8f0f8" stroke-width="1.500"/>
<rect x="57" y="1044" width="1.500" height="1.500" fill="#ddd"/><rect x="60" y="1044" width="1.500" height="1.500" fill="#ddd"/><rect x="63" y="1044" width="1.500" height="1.500" fill="#ddd"/>
<path d="M104,1048 q6,-5 12,-3" stroke="#e8b020" stroke-width="2" fill="none"/>
<rect x="138.500" y="1041.500" width="52" height="10" rx="2" fill="#a8a29a" stroke="#d0ccc4"/><rect x="150" y="1046" width="14" height="4" fill="#e0c050"/>
<path d="M193.500,1041 v8 M196.500,1041 v8" stroke="#8a847c"/>
<circle cx="290" cy="1056" r="12" fill="#1e8ae6"/><circle cx="352" cy="1057" r="13" fill="#2a7ae0"/><circle cx="352" cy="1052" r="4" fill="#fff"/>
<rect x="401" y="1045" width="22" height="4" fill="#e8c040"/><rect x="408" y="1046" width="14" height="3" fill="#40a0e0"/>
<rect x="448.500" y="1041.500" width="57" height="10" rx="2" fill="#a8a098" stroke="#ccc6be"/><circle cx="477" cy="1055" r="10" fill="#d84030"/>
<rect x="524" y="1044" width="18" height="6" rx="2" fill="#f4f4f4"/><circle cx="601" cy="1056" r="11" fill="#3a9a30"/>
<rect x="634.500" y="1041.500" width="57" height="10" rx="2" fill="#988e84" stroke="#bab2a8"/><rect x="697.500" y="1041.500" width="56" height="10" rx="2" fill="#988e84" stroke="#bab2a8"/>
<rect x="1446" y="1044" width="1.500" height="1.500" fill="#ddd"/><rect x="1449" y="1044" width="1.500" height="1.500" fill="#ddd"/><rect x="1452" y="1044" width="1.500" height="1.500" fill="#ddd"/>
<text x="1852" y="1053" font-size="11" fill="#fff" font-family="Liberation Sans,sans-serif">16:30</text>
<rect x="1906.500" y="1041.500" width="14" height="10" fill="#8a8078" stroke="#b0a8a0"/>
</svg>
</body>
</html>
